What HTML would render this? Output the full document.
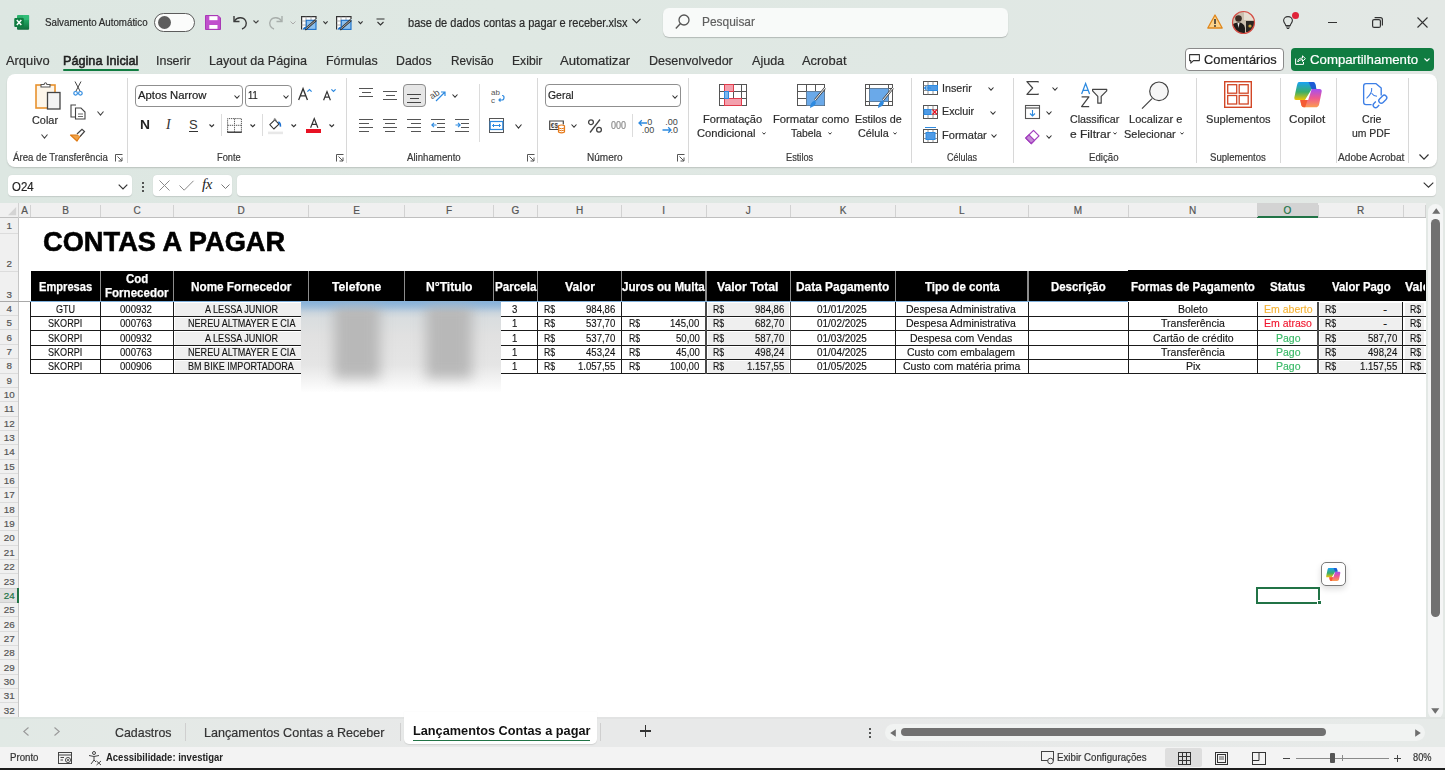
<!DOCTYPE html><html><head><meta charset="utf-8"><style>
*{box-sizing:border-box;margin:0;padding:0}
html,body{width:1445px;height:770px;overflow:hidden;background:linear-gradient(90deg,#dde7e2 0,#dfe8e3 500px,#e0e8e4 950px,#e3e8e5 1445px);font-family:"Liberation Sans",sans-serif;color:#242424}
.a{position:absolute;white-space:nowrap}
svg{position:absolute;overflow:visible}
.tab{position:absolute;top:52px;font-size:14px;color:#2b2b2b;white-space:nowrap}
#ribbon{position:absolute;left:7px;top:74px;width:1430px;height:93px;background:#fff;border-radius:8px;box-shadow:0 1px 1.5px rgba(0,0,0,.16)}
.sep{position:absolute;width:1px;background:#d8d8d8}
.gl{position:absolute;top:151px;font-size:11px;color:#424242;white-space:nowrap}
.rt{position:absolute;font-size:12.5px;color:#333;white-space:nowrap;text-align:center;line-height:15px}
.ch{position:absolute;top:203px;height:15px;font-size:11px;color:#505050;text-align:center;line-height:15px;background:#f0f0f0}
.chs{position:absolute;top:205px;height:12px;width:1px;background:#d4d4d4}
.rh{position:absolute;left:0;width:18px;font-size:11px;color:#505050;text-align:center;background:#f0f0f0}
.rhs{position:absolute;left:0;width:18px;height:1px;background:#dadada}
.cell{position:absolute;font-size:11px;color:#111;white-space:nowrap;overflow:hidden;line-height:14px}
.hd{position:absolute;color:#fff;font-weight:bold;font-size:12.5px;text-align:center;white-space:nowrap;line-height:15px;letter-spacing:-0.1px}
</style></head><body>

<svg style="left:14px;top:15px" width="16" height="16" viewBox="0 0 16 16">
 <defs><linearGradient id="xlg" x1="0" y1="0" x2="0" y2="1"><stop offset="0" stop-color="#2fb872"/><stop offset=".5" stop-color="#1d9a5a"/><stop offset="1" stop-color="#0f6b3a"/></linearGradient></defs>
 <rect x="3" y="0.1" width="12.1" height="14.7" rx="1" fill="url(#xlg)"/>
 <rect x="9" y="0.1" width="6.1" height="5" fill="#35c27e" opacity=".7"/>
 <rect x="0.25" y="2.9" width="9.6" height="9.2" rx="1" fill="#107c41"/>
 <path d="M2.8 5 L7.3 10 M7.3 5 L2.8 10" stroke="#fff" stroke-width="1.5"/>
</svg>
<div class="a" style="left:45.20px;top:16.85px;font-size:11.5px;line-height:11.5px;color:#2a2a2a;transform:scaleX(0.8492);transform-origin:0 0;-webkit-text-stroke:0.2px currentColor;">Salvamento Automático</div>
<div class="a" style="left:154px;top:13px;width:41px;height:19px;border:1px solid #5c5c5c;border-radius:10px;background:#fbfcfb"></div>
<div class="a" style="left:158px;top:16px;width:13px;height:13px;border-radius:50%;background:#5d5d5d"></div>
<svg style="left:205px;top:15px" width="16" height="15" viewBox="0 0 16 15">
 <path d="M0.5 0.5 H13 L15.5 3 V14.5 H0.5 Z" fill="#c04fcd" stroke="#a83ab5" stroke-width="1"/>
 <rect x="4.3" y="1.2" width="8.2" height="4" fill="#fff"/>
 <rect x="4.3" y="10" width="8.2" height="3.8" fill="#fff"/>
</svg>
<svg style="left:232px;top:14px" width="16" height="16" viewBox="0 0 16 16">
 <path d="M2 2 V7.5 H7.5" fill="none" stroke="#3a3a3a" stroke-width="1.4"/>
 <path d="M2.5 7 C5 3 11 2.5 13.5 6.5 C15.5 10 13.5 14 10 15" fill="none" stroke="#3a3a3a" stroke-width="1.4"/>
</svg>
<svg style="left:253px;top:20px" width="6" height="4" viewBox="0 0 6 4"><path d="M0.5 0.5 L3 3 L5.5 0.5" fill="none" stroke="#444" stroke-width="1.1"/></svg>
<svg style="left:268px;top:14px" width="16" height="16" viewBox="0 0 16 16">
 <path d="M14 2 V7.5 H8.5" fill="none" stroke="#a8aeab" stroke-width="1.4"/>
 <path d="M13.5 7 C11 3 5 2.5 2.5 6.5 C0.5 10 2.5 14 6 15" fill="none" stroke="#a8aeab" stroke-width="1.4"/>
</svg>
<svg style="left:290px;top:21px" width="6" height="4" viewBox="0 0 6 4"><path d="M0.5 0.5 L3 3 L5.5 0.5" fill="none" stroke="#aaa" stroke-width="1"/></svg>

<svg style="left:301px;top:15.8px" width="16" height="14" viewBox="0 0 16 14">
 <rect x="0.6" y="0.6" width="14.4" height="12.8" fill="#fff"/>
 <path d="M0.6 13.4 V0.6 H15 V3" fill="none" stroke="#333" stroke-width="1.2"/>
 <path d="M0.6 5 H5 M0.6 9 H5 M5 0.6 V13 M10 0.6 V4" stroke="#999" stroke-width=".8"/>
 <rect x="5.3" y="4.3" width="9.7" height="9.1" fill="#8cc0ee" stroke="#1b6fc8" stroke-width="1.1"/>
 <path d="M4 13.6 L15 4" stroke="#333" stroke-width="2.4"/>
 <path d="M5 12.6 L14.4 4.6" stroke="#ddd" stroke-width=".7"/>
 <path d="M1.5 13.8 Q2.5 10.5 5.5 10.8 Q6.2 13.5 1.5 13.8 Z" fill="#1b6fc8"/>
</svg>
<svg style="left:323px;top:20.7px" width="5" height="3" viewBox="0 0 5 3"><path d="M0.4 0.4 L2.5 2.6 L4.6 0.4" fill="none" stroke="#333" stroke-width="1.1"/></svg>
<svg style="left:336px;top:15.8px" width="16" height="14" viewBox="0 0 16 14">
 <rect x="0.6" y="0.6" width="14.4" height="12.8" fill="#fff"/>
 <path d="M0.6 13.4 V0.6 H15 V3" fill="none" stroke="#333" stroke-width="1.2"/>
 <path d="M0.6 5 H5 M0.6 9 H5 M5 0.6 V13 M10 0.6 V4" stroke="#999" stroke-width=".8"/>
 <rect x="5.3" y="4.3" width="9.7" height="9.1" fill="#8cc0ee" stroke="#1b6fc8" stroke-width="1.1"/>
 <path d="M4 13.6 L15 4" stroke="#333" stroke-width="2.4"/>
 <path d="M5 12.6 L14.4 4.6" stroke="#ddd" stroke-width=".7"/>
 <path d="M1.5 13.8 Q2.5 10.5 5.5 10.8 Q6.2 13.5 1.5 13.8 Z" fill="#1b6fc8"/>
</svg>
<svg style="left:358px;top:20.7px" width="5" height="3" viewBox="0 0 5 3"><path d="M0.4 0.4 L2.5 2.6 L4.6 0.4" fill="none" stroke="#333" stroke-width="1.1"/></svg>

<svg style="left:376px;top:18px" width="9" height="9" viewBox="0 0 9 9"><path d="M0.5 1 H8.5 M1.5 4 L4.5 7 L7.5 4" fill="none" stroke="#333" stroke-width="1.1"/></svg>
<div class="a" style="left:407.60px;top:17.05px;font-size:12.3px;line-height:12.3px;color:#2a2a2a;transform:scaleX(0.8967);transform-origin:0 0;-webkit-text-stroke:0.2px currentColor;">base de dados contas a pagar e receber.xlsx</div>
<svg style="left:632px;top:18px" width="9" height="6" viewBox="0 0 9 6"><path d="M0.5 0.8 L4.5 4.8 L8.5 0.8" fill="none" stroke="#333" stroke-width="1.2"/></svg>
<div class="a" style="left:663px;top:8px;width:345px;height:29px;background:#f8faf9;border-radius:6px;box-shadow:0 1px 1px rgba(0,0,0,.2)"></div>
<svg style="left:675px;top:14px" width="15" height="16" viewBox="0 0 15 16"><circle cx="9" cy="6" r="5" fill="none" stroke="#555" stroke-width="1.3"/><path d="M5.5 9.5 L0.8 14.5" stroke="#555" stroke-width="1.4"/></svg>
<div class="a" style="left:701.70px;top:15.00px;font-size:13.4px;line-height:13.4px;color:#5f5f5f;transform:scaleX(0.8895);transform-origin:0 0;-webkit-text-stroke:0.2px currentColor;">Pesquisar</div>
<svg style="left:1207px;top:14px" width="16" height="15" viewBox="0 0 16 15"><path d="M8 1 L15.2 14 H0.8 Z" fill="#fbd28a" stroke="#e0871b" stroke-width="1.3" stroke-linejoin="round"/><path d="M8 5 V10" stroke="#2a2a2a" stroke-width="1.5"/><circle cx="8" cy="12" r="0.9" fill="#2a2a2a"/></svg>
<svg style="left:1232px;top:11px" width="23" height="23" viewBox="0 0 23 23">
<defs><clipPath id="avc"><circle cx="11.5" cy="11.5" r="11"/></clipPath></defs>
<g clip-path="url(#avc)">
<rect x="0" y="0" width="23" height="23" fill="#cbbfae"/>
<rect x="12" y="0" width="11" height="9" fill="#e6dfd2"/>
<rect x="14" y="10" width="8" height="11" fill="#2a2622"/>
<circle cx="18" cy="15" r="1.6" fill="#c9a23c"/>
<circle cx="6.5" cy="7.5" r="3.3" fill="#3a2c24"/>
<path d="M-1 23 V16 Q1 11.5 6.5 11.5 Q12 11.5 13 17 V23 Z" fill="#1f1c1a"/>
<path d="M5.5 12 L6.5 17 L7.5 12 Z" fill="#eee"/>
</g>
<circle cx="11.5" cy="11.5" r="11" fill="none" stroke="#d44d45" stroke-width="1.2"/>
</svg>
<svg style="left:1282.8px;top:16px" width="10" height="13" viewBox="0 0 10 13"><path d="M5 0.6 C2.2 0.6 0.6 2.6 0.6 4.6 C0.6 6.8 2.6 7.6 2.8 9.6 H7.2 C7.4 7.6 9.4 6.8 9.4 4.6 C9.4 2.6 7.8 0.6 5 0.6 Z" fill="none" stroke="#333" stroke-width="1.1"/><path d="M3 11 H7 M3.8 12.5 H6.2" stroke="#333" stroke-width="1"/></svg>
<div class="a" style="left:1291.7px;top:11.5px;width:7px;height:7px;border-radius:50%;background:#e0243a"></div>
<div class="a" style="left:1327.7px;top:21.5px;width:9.5px;height:1.5px;background:#333"></div>
<svg style="left:1372px;top:17px" width="11" height="11" viewBox="0 0 11 11"><rect x="0.6" y="2.6" width="7.8" height="7.8" rx="1.5" fill="none" stroke="#333" stroke-width="1.2"/><path d="M2.6 0.6 H8.4 Q10.4 0.6 10.4 2.6 V8.4" fill="none" stroke="#333" stroke-width="1.2"/></svg>
<svg style="left:1417px;top:17px" width="11" height="11" viewBox="0 0 11 11"><path d="M0.5 0.5 L10.5 10.5 M10.5 0.5 L0.5 10.5" stroke="#333" stroke-width="1.1"/></svg>

<div class="a" style="left:6.20px;top:53.80px;font-size:13px;line-height:13px;color:#2e2e2e;transform:scaleX(0.9891);transform-origin:0 0;-webkit-text-stroke:0.2px currentColor;">Arquivo</div>
<div class="a" style="left:63.00px;top:53.80px;font-size:13px;line-height:13px;color:#1f1f1f;transform:scaleX(0.9751);transform-origin:0 0;-webkit-text-stroke:0.55px #1f1f1f;">Página Inicial</div>
<div class="a" style="left:156.40px;top:53.80px;font-size:13px;line-height:13px;color:#2e2e2e;transform:scaleX(0.9580);transform-origin:0 0;-webkit-text-stroke:0.2px currentColor;">Inserir</div>
<div class="a" style="left:209.30px;top:53.80px;font-size:13px;line-height:13px;color:#2e2e2e;transform:scaleX(0.9684);transform-origin:0 0;-webkit-text-stroke:0.2px currentColor;">Layout da Página</div>
<div class="a" style="left:326.00px;top:53.80px;font-size:13px;line-height:13px;color:#2e2e2e;transform:scaleX(0.9543);transform-origin:0 0;-webkit-text-stroke:0.2px currentColor;">Fórmulas</div>
<div class="a" style="left:396.30px;top:53.80px;font-size:13px;line-height:13px;color:#2e2e2e;transform:scaleX(0.9474);transform-origin:0 0;-webkit-text-stroke:0.2px currentColor;">Dados</div>
<div class="a" style="left:450.80px;top:53.80px;font-size:13px;line-height:13px;color:#2e2e2e;transform:scaleX(0.9049);transform-origin:0 0;-webkit-text-stroke:0.2px currentColor;">Revisão</div>
<div class="a" style="left:511.60px;top:53.80px;font-size:13px;line-height:13px;color:#2e2e2e;transform:scaleX(0.9352);transform-origin:0 0;-webkit-text-stroke:0.2px currentColor;">Exibir</div>
<div class="a" style="left:560.40px;top:53.80px;font-size:13px;line-height:13px;color:#2e2e2e;transform:scaleX(1.0107);transform-origin:0 0;-webkit-text-stroke:0.2px currentColor;">Automatizar</div>
<div class="a" style="left:649.40px;top:53.80px;font-size:13px;line-height:13px;color:#2e2e2e;transform:scaleX(0.9664);transform-origin:0 0;-webkit-text-stroke:0.2px currentColor;">Desenvolvedor</div>
<div class="a" style="left:751.80px;top:53.80px;font-size:13px;line-height:13px;color:#2e2e2e;transform:scaleX(0.9684);transform-origin:0 0;-webkit-text-stroke:0.2px currentColor;">Ajuda</div>
<div class="a" style="left:802.30px;top:53.80px;font-size:13px;line-height:13px;color:#2e2e2e;transform:scaleX(0.9933);transform-origin:0 0;-webkit-text-stroke:0.2px currentColor;">Acrobat</div>
<div class="a" style="left:62.6px;top:69px;width:76.5px;height:2px;background:#107c41;border-radius:1px"></div>

<div class="a" style="left:1185px;top:48px;width:99px;height:23px;background:#fff;border:1px solid #8a8a8a;border-radius:4px"></div>
<svg style="left:1189.3px;top:54.4px" width="11" height="10" viewBox="0 0 11 10"><path d="M0.6 0.6 H10.4 V6.6 H4.4 L1.8 9.2 V6.6 H0.6 Z" fill="none" stroke="#333" stroke-width="1.05" stroke-linejoin="round"/></svg>
<div class="a" style="left:1204.30px;top:52.80px;font-size:13px;line-height:13px;color:#222;transform:scaleX(0.9865);transform-origin:0 0;-webkit-text-stroke:0.2px currentColor;">Comentários</div>
<div class="a" style="left:1291px;top:48px;width:143px;height:23px;background:#107c41;border-radius:4px"></div>
<svg style="left:1294.7px;top:53.9px" width="11" height="11" viewBox="0 0 11 11"><path d="M0.6 4.5 V10.4 H8.5 V8" fill="none" stroke="#fff" stroke-width="1"/><path d="M2.8 8 C2.8 5 5 4 7.5 4 V1.8 L10.4 4.6 L7.5 7.4 V5.6 C5.5 5.6 4 6.4 2.8 8 Z" fill="none" stroke="#fff" stroke-width="1" stroke-linejoin="round"/></svg>
<div class="a" style="left:1310.00px;top:52.80px;font-size:13px;line-height:13px;color:#fff;transform:scaleX(1.0168);transform-origin:0 0;-webkit-text-stroke:0.2px currentColor;">Compartilhamento</div>
<svg style="left:1424px;top:58px" width="6" height="4" viewBox="0 0 6 4"><path d="M0.5 0.5 L3 3 L5.5 0.5" fill="none" stroke="#fff" stroke-width="1.1"/></svg>

<div id="ribbon"></div>
<div class="sep" style="left:127px;top:78px;height:85px"></div>
<div class="sep" style="left:346px;top:78px;height:85px"></div>
<div class="sep" style="left:537px;top:78px;height:85px"></div>
<div class="sep" style="left:688px;top:78px;height:85px"></div>
<div class="sep" style="left:911px;top:78px;height:85px"></div>
<div class="sep" style="left:1013px;top:78px;height:85px"></div>
<div class="sep" style="left:1196px;top:78px;height:85px"></div>
<div class="sep" style="left:1280px;top:78px;height:85px"></div>
<div class="sep" style="left:1336px;top:78px;height:85px"></div>
<div class="sep" style="left:1408px;top:78px;height:85px"></div>
<div class="sep" style="left:221px;top:114px;height:22px;background:#dcdcdc"></div>
<div class="sep" style="left:262px;top:114px;height:22px;background:#dcdcdc"></div>
<div class="sep" style="left:479px;top:84px;height:58px;background:#dcdcdc"></div>
<div class="sep" style="left:632px;top:114px;height:23px;background:#dcdcdc"></div>
<div class="a" style="left:13.10px;top:153.00px;font-size:10px;line-height:10px;color:#3a3a3a;transform:scaleX(0.9635);transform-origin:0 0;-webkit-text-stroke:0.2px currentColor;">Área de Transferência</div>
<div class="a" style="left:216.90px;top:153.00px;font-size:10px;line-height:10px;color:#3a3a3a;transform:scaleX(0.9268);transform-origin:0 0;-webkit-text-stroke:0.2px currentColor;">Fonte</div>
<div class="a" style="left:407.30px;top:153.00px;font-size:10px;line-height:10px;color:#3a3a3a;transform:scaleX(0.9660);transform-origin:0 0;-webkit-text-stroke:0.2px currentColor;">Alinhamento</div>
<div class="a" style="left:586.70px;top:153.00px;font-size:10px;line-height:10px;color:#3a3a3a;transform:scaleX(1.0009);transform-origin:0 0;-webkit-text-stroke:0.2px currentColor;">Número</div>
<div class="a" style="left:785.70px;top:153.00px;font-size:10px;line-height:10px;color:#3a3a3a;transform:scaleX(0.9235);transform-origin:0 0;-webkit-text-stroke:0.2px currentColor;">Estilos</div>
<div class="a" style="left:946.70px;top:153.00px;font-size:10px;line-height:10px;color:#3a3a3a;transform:scaleX(0.9026);transform-origin:0 0;-webkit-text-stroke:0.2px currentColor;">Células</div>
<div class="a" style="left:1089.20px;top:153.00px;font-size:10px;line-height:10px;color:#3a3a3a;transform:scaleX(0.9648);transform-origin:0 0;-webkit-text-stroke:0.2px currentColor;">Edição</div>
<div class="a" style="left:1209.70px;top:153.00px;font-size:10px;line-height:10px;color:#3a3a3a;transform:scaleX(0.9577);transform-origin:0 0;-webkit-text-stroke:0.2px currentColor;">Suplementos</div>
<div class="a" style="left:1338.30px;top:153.00px;font-size:10px;line-height:10px;color:#3a3a3a;transform:scaleX(1.0121);transform-origin:0 0;-webkit-text-stroke:0.2px currentColor;">Adobe Acrobat</div>
<svg style="left:115px;top:154px" width="8" height="8" viewBox="0 0 8 8"><path d="M0.5 7.5 V0.5 H7.5" fill="none" stroke="#555" stroke-width="1"/><path d="M2.5 2.5 L7 7 M3.5 7 H7 V3.5" fill="none" stroke="#555" stroke-width="1"/></svg>
<svg style="left:336px;top:154px" width="8" height="8" viewBox="0 0 8 8"><path d="M0.5 7.5 V0.5 H7.5" fill="none" stroke="#555" stroke-width="1"/><path d="M2.5 2.5 L7 7 M3.5 7 H7 V3.5" fill="none" stroke="#555" stroke-width="1"/></svg>
<svg style="left:527px;top:154px" width="8" height="8" viewBox="0 0 8 8"><path d="M0.5 7.5 V0.5 H7.5" fill="none" stroke="#555" stroke-width="1"/><path d="M2.5 2.5 L7 7 M3.5 7 H7 V3.5" fill="none" stroke="#555" stroke-width="1"/></svg>
<svg style="left:677px;top:154px" width="8" height="8" viewBox="0 0 8 8"><path d="M0.5 7.5 V0.5 H7.5" fill="none" stroke="#555" stroke-width="1"/><path d="M2.5 2.5 L7 7 M3.5 7 H7 V3.5" fill="none" stroke="#555" stroke-width="1"/></svg>
<svg style="left:1419px;top:154px" width="10" height="6" viewBox="0 0 10 6"><path d="M0.5 0.5 L5.0 5.2 L9.5 0.5" fill="none" stroke="#333" stroke-width="1.2"/></svg>
<svg style="left:35px;top:81px" width="26" height="29" viewBox="0 0 26 29">
<rect x="1" y="4" width="19" height="23" fill="#fdf6ea" stroke="#e8922d" stroke-width="1.6"/>
<path d="M6 6 V3.5 H9 Q10.5 0 12 3.5 H15 V6 Z" fill="#fff" stroke="#555" stroke-width="1.1"/>
<rect x="12.5" y="11.5" width="12.5" height="16.5" fill="#f4f4f4" stroke="#444" stroke-width="1.3"/>
</svg>
<div class="a" style="left:32.00px;top:115.05px;font-size:11.5px;line-height:11.5px;color:#2e2e2e;transform:scaleX(0.9461);transform-origin:0 0;-webkit-text-stroke:0.2px currentColor;">Colar</div>
<svg style="left:41px;top:134px" width="7" height="5" viewBox="0 0 7 5"><path d="M0.5 0.5 L3.5 4.2 L6.5 0.5" fill="none" stroke="#444" stroke-width="1.1"/></svg>
<svg style="left:73px;top:81px" width="10" height="15" viewBox="0 0 10 15"><path d="M2 0.5 L7 10 M8 0.5 L3 10" stroke="#444" stroke-width="1"/><circle cx="2.6" cy="12.3" r="1.8" fill="none" stroke="#2d8ae0" stroke-width="1.2"/><circle cx="7.4" cy="12.3" r="1.8" fill="none" stroke="#2d8ae0" stroke-width="1.2"/></svg>
<svg style="left:70px;top:104px" width="16" height="16" viewBox="0 0 16 16"><path d="M6 1 H1 V13 H6" fill="none" stroke="#444" stroke-width="1.1"/><path d="M5.5 4 H11 L15 8 V15 H5.5 Z" fill="#fff" stroke="#444" stroke-width="1.1"/><path d="M8 10 H13 M8 12.5 H13" stroke="#444" stroke-width=".8"/></svg>
<svg style="left:97px;top:111px" width="7" height="5" viewBox="0 0 7 5"><path d="M0.5 0.5 L3.5 4.2 L6.5 0.5" fill="none" stroke="#444" stroke-width="1.1"/></svg>
<svg style="left:70px;top:128px" width="16" height="15" viewBox="0 0 16 15"><path d="M0.5 7 L7 13 L11 7 Z" fill="#f0a34a" stroke="#e07a12" stroke-width="1.2" stroke-linejoin="round"/><path d="M7 6 L12 1.2 L14.5 3.5 L10 8.5" fill="#fff" stroke="#444" stroke-width="1.2"/></svg>
<div class="a" style="left:135px;top:85px;width:108px;height:22px;border:1px solid #8f8f8f;border-radius:4px;background:#fff"></div>
<div class="a" style="left:137.50px;top:90.15px;font-size:11.3px;line-height:11.3px;color:#222;transform:scaleX(1.0007);transform-origin:0 0;-webkit-text-stroke:0.2px currentColor;">Aptos Narrow</div>
<svg style="left:234px;top:95px" width="6" height="4" viewBox="0 0 6 4"><path d="M0.5 0.5 L3.0 3.2 L5.5 0.5" fill="none" stroke="#333" stroke-width="1.1"/></svg>
<div class="a" style="left:245px;top:85px;width:47px;height:22px;border:1px solid #8f8f8f;border-radius:4px;background:#fff"></div>
<div class="a" style="left:248.00px;top:90.15px;font-size:11.3px;line-height:11.3px;color:#222;transform:scaleX(0.8269);transform-origin:0 0;-webkit-text-stroke:0.2px currentColor;">11</div>
<svg style="left:283px;top:95px" width="6" height="4" viewBox="0 0 6 4"><path d="M0.5 0.5 L3.0 3.2 L5.5 0.5" fill="none" stroke="#333" stroke-width="1.1"/></svg>
<svg style="left:297.8px;top:88.2px" width="10.1" height="12" viewBox="0 0 10.1 12"><path d="M0.65 12 L5.05 0.65 L9.45 12 M2.222 7.92 H7.878" fill="none" stroke="#333" stroke-width="1.3"/></svg>
<svg style="left:307px;top:89px" width="5" height="3" viewBox="0 0 5 3"><path d="M0.4 2.7 L2.5 0.5 L4.6 2.7" fill="none" stroke="#2d8ae0" stroke-width="1.2"/></svg>
<svg style="left:323.3px;top:90.9px" width="8" height="9.3" viewBox="0 0 8 9.3"><path d="M0.6 9.3 L4.0 0.6 L7.4 9.3 M1.76 6.138000000000001 H6.24" fill="none" stroke="#333" stroke-width="1.2"/></svg>
<svg style="left:331.1px;top:89.3px" width="5" height="3" viewBox="0 0 5 3"><path d="M0.4 0.3 L2.5 2.5 L4.6 0.3" fill="none" stroke="#2d8ae0" stroke-width="1.2"/></svg>
<div class="a" style="left:140.40px;top:118.75px;font-size:12.5px;line-height:12.5px;color:#222;font-weight:bold;transform:scaleX(1.1078);transform-origin:0 0;">N</div>
<div class="a" style="left:166px;top:117px;font-size:14px;color:#333;font-style:italic;font-family:&quot;Liberation Serif&quot;,serif">I</div>
<div class="a" style="left:189px;top:117px;font-size:13px;color:#333;">S</div>
<div class="a" style="left:189px;top:131px;width:9px;height:1px;background:#333"></div>
<svg style="left:209px;top:124.2px" width="5.5" height="3.5" viewBox="0 0 5.5 3.5"><path d="M0.5 0.5 L2.75 2.7 L5.0 0.5" fill="none" stroke="#333" stroke-width="1.1"/></svg>
<svg style="left:227px;top:117.8px" width="15" height="15" viewBox="0 0 15 15"><path d="M0.6 14 V0.6 H14.4 V14 M0.6 7.3 H14.4" fill="none" stroke="#555" stroke-width="1" stroke-dasharray="1.3 0.8"/><path d="M7.5 0.6 V14" stroke="#666" stroke-width="1" stroke-dasharray="1.3 0.8"/><path d="M0.2 14.2 H14.8" stroke="#333" stroke-width="1.4"/></svg>
<svg style="left:250px;top:124.2px" width="5.5" height="3.5" viewBox="0 0 5.5 3.5"><path d="M0.5 0.5 L2.75 2.7 L5.0 0.5" fill="none" stroke="#333" stroke-width="1.1"/></svg>
<svg style="left:268px;top:117.5px" width="16" height="17" viewBox="0 0 16 17"><path d="M1.8 6.6 L6.8 1.8 L11 6.2 L5.8 11 Z" fill="#fff" stroke="#333" stroke-width="1.1" stroke-linejoin="round"/><path d="M6.2 3 V0.8 Q6.8 0.2 7.4 0.8 L8.4 3.5" fill="none" stroke="#777" stroke-width="1"/><path d="M10.2 4.4 Q12.6 4.2 12.4 8.6" fill="none" stroke="#1b6fd0" stroke-width="1.6"/><rect x="0" y="13.6" width="15" height="2.6" fill="#e8e8e8"/></svg>
<svg style="left:291px;top:124.2px" width="5.5" height="3.5" viewBox="0 0 5.5 3.5"><path d="M0.5 0.5 L2.75 2.7 L5.0 0.5" fill="none" stroke="#333" stroke-width="1.1"/></svg>
<svg style="left:309.9px;top:118.2px" width="8.5" height="9.7" viewBox="0 0 8.5 9.7"><path d="M0.6 9.7 L4.25 0.6 L7.9 9.7 M1.87 6.402 H6.63" fill="none" stroke="#333" stroke-width="1.2"/></svg>
<div class="a" style="left:306.4px;top:129px;width:15.1px;height:3.8px;background:#e81123"></div>
<svg style="left:329px;top:124.2px" width="5.5" height="3.5" viewBox="0 0 5.5 3.5"><path d="M0.5 0.5 L2.75 2.7 L5.0 0.5" fill="none" stroke="#333" stroke-width="1.1"/></svg>
<div class="a" style="left:359px;top:88px;width:14px;height:1.3px;background:#555"></div><div class="a" style="left:362px;top:92px;width:9px;height:1.3px;background:#555"></div><div class="a" style="left:359px;top:96px;width:14px;height:1.3px;background:#555"></div>
<div class="a" style="left:383px;top:91px;width:14px;height:1.3px;background:#555"></div><div class="a" style="left:386px;top:95px;width:9px;height:1.3px;background:#555"></div><div class="a" style="left:383px;top:99px;width:14px;height:1.3px;background:#555"></div>
<div class="a" style="left:403px;top:84px;width:23px;height:23px;border:1px solid #8c8c8c;border-radius:4px;background:#e6e6e6"></div>
<div class="a" style="left:407px;top:94px;width:14px;height:1.3px;background:#444"></div><div class="a" style="left:410px;top:98px;width:9px;height:1.3px;background:#444"></div><div class="a" style="left:407px;top:102px;width:14px;height:1.3px;background:#444"></div>
<svg style="left:430px;top:87px" width="17" height="15" viewBox="0 0 17 15"><text x="0" y="10" font-size="9" fill="#444" transform="rotate(-35 5 8)" font-family="Liberation Sans">ab</text><path d="M6 14 L15 5 M11 5 H15 V9" fill="none" stroke="#2d8ae0" stroke-width="1.2"/></svg>
<svg style="left:452px;top:94px" width="6" height="4" viewBox="0 0 6 4"><path d="M0.5 0.5 L3.0 3.2 L5.5 0.5" fill="none" stroke="#333" stroke-width="1.1"/></svg>
<div class="a" style="left:359px;top:119px;width:14px;height:1.3px;background:#555"></div><div class="a" style="left:359px;top:123px;width:10px;height:1.3px;background:#555"></div><div class="a" style="left:359px;top:127px;width:14px;height:1.3px;background:#555"></div><div class="a" style="left:359px;top:131px;width:10px;height:1.3px;background:#555"></div>
<div class="a" style="left:383px;top:119px;width:14px;height:1.3px;background:#555"></div><div class="a" style="left:385px;top:123px;width:10px;height:1.3px;background:#555"></div><div class="a" style="left:383px;top:127px;width:14px;height:1.3px;background:#555"></div><div class="a" style="left:385px;top:131px;width:10px;height:1.3px;background:#555"></div>
<div class="a" style="left:407px;top:119px;width:14px;height:1.3px;background:#555"></div><div class="a" style="left:411px;top:123px;width:10px;height:1.3px;background:#555"></div><div class="a" style="left:407px;top:127px;width:14px;height:1.3px;background:#555"></div><div class="a" style="left:411px;top:131px;width:10px;height:1.3px;background:#555"></div>
<div class="a" style="left:431px;top:119px;width:14px;height:1.3px;background:#555"></div><div class="a" style="left:437px;top:123px;width:8px;height:1.3px;background:#555"></div><div class="a" style="left:437px;top:127px;width:8px;height:1.3px;background:#555"></div><div class="a" style="left:431px;top:131px;width:14px;height:1.3px;background:#555"></div>
<svg style="left:431px;top:122px" width="6" height="6" viewBox="0 0 6 6"><path d="M5.5 3 H0.8 M3 0.8 L0.8 3 L3 5.2" fill="none" stroke="#2d8ae0" stroke-width="1.1"/></svg>
<div class="a" style="left:455px;top:119px;width:14px;height:1.3px;background:#555"></div><div class="a" style="left:461px;top:123px;width:8px;height:1.3px;background:#555"></div><div class="a" style="left:461px;top:127px;width:8px;height:1.3px;background:#555"></div><div class="a" style="left:455px;top:131px;width:14px;height:1.3px;background:#555"></div>
<svg style="left:455px;top:122px" width="6" height="6" viewBox="0 0 6 6"><path d="M0.5 3 H5.2 M3 0.8 L5.2 3 L3 5.2" fill="none" stroke="#2d8ae0" stroke-width="1.1"/></svg>
<svg style="left:491px;top:88px" width="14" height="16" viewBox="0 0 14 16"><text x="0" y="7" font-size="8" fill="#555" font-family="Liberation Sans">ab</text><text x="0" y="14.5" font-size="8" fill="#555" font-family="Liberation Sans">c</text><path d="M8 12 H11 Q13 12 13 9.5 Q13 7.5 11 7.5 M9.5 10.5 L8 12 L9.5 13.5" fill="none" stroke="#2d8ae0" stroke-width="1.2"/></svg>
<svg style="left:489px;top:118px" width="15" height="15" viewBox="0 0 15 15"><rect x="0.5" y="0.5" width="14" height="14" fill="none" stroke="#555" stroke-width="1"/><rect x="1.2" y="3.5" width="12.6" height="8" fill="#fff" stroke="#2d8ae0" stroke-width="1.2"/><path d="M3.5 7.5 H11.5 M5 6 L3.5 7.5 L5 9 M10 6 L11.5 7.5 L10 9" fill="none" stroke="#2d8ae0" stroke-width="1"/></svg>
<svg style="left:515px;top:124px" width="7" height="5" viewBox="0 0 7 5"><path d="M0.5 0.5 L3.5 4.2 L6.5 0.5" fill="none" stroke="#333" stroke-width="1.1"/></svg>
<div class="a" style="left:545px;top:84px;width:136px;height:23px;border:1px solid #8f8f8f;border-radius:4px;background:#fff"></div>
<div class="a" style="left:547.50px;top:90.35px;font-size:11.3px;line-height:11.3px;color:#222;transform:scaleX(0.9228);transform-origin:0 0;-webkit-text-stroke:0.2px currentColor;">Geral</div>
<svg style="left:672px;top:95px" width="6" height="4" viewBox="0 0 6 4"><path d="M0.5 0.5 L3.0 3.2 L5.5 0.5" fill="none" stroke="#333" stroke-width="1.1"/></svg>
<svg style="left:549px;top:120px" width="16" height="14" viewBox="0 0 16 14"><path d="M9 9.5 H0.7 V1 H14.3 V4.5" fill="none" stroke="#444" stroke-width="1.2"/><text x="1.8" y="8" font-size="6.5" fill="#444" font-family="Liberation Sans" font-weight="bold">€$</text><path d="M9.5 5.8 Q12.5 4.2 15.5 5.8 V12 Q12.5 13.8 9.5 12 Z" fill="#fff" stroke="#e67a1a" stroke-width="1.2"/><path d="M9.5 8 Q12.5 9.5 15.5 8 M9.5 10 Q12.5 11.5 15.5 10" fill="none" stroke="#e67a1a" stroke-width="1"/></svg>
<svg style="left:571px;top:124px" width="6" height="4" viewBox="0 0 6 4"><path d="M0.5 0.5 L3.0 3.2 L5.5 0.5" fill="none" stroke="#333" stroke-width="1.1"/></svg>
<svg style="left:588px;top:119px" width="14" height="14" viewBox="0 0 14 14"><circle cx="3" cy="3.2" r="2.4" fill="none" stroke="#444" stroke-width="1.3"/><circle cx="11" cy="10.8" r="2.4" fill="none" stroke="#444" stroke-width="1.3"/><path d="M12 0.5 L2 13.5" stroke="#444" stroke-width="1.3"/></svg>
<div class="a" style="left:611.00px;top:119.75px;font-size:10.5px;line-height:10.5px;color:#8a8a8a;transform:scaleX(0.8562);transform-origin:0 0;-webkit-text-stroke:0.2px currentColor;">000</div>
<svg style="left:638px;top:117px" width="16" height="17" viewBox="0 0 16 17"><path d="M1 6 H9 M3.8 3.2 L1 6 L3.8 8.8" fill="none" stroke="#2d8ae0" stroke-width="1.3"/><text x="9.3" y="8" font-size="9" fill="#444" font-family="Liberation Sans">0</text><text x="3.8" y="16" font-size="9" fill="#444" font-family="Liberation Sans">.00</text></svg>
<svg style="left:662px;top:117px" width="16" height="17" viewBox="0 0 16 17"><text x="3.3" y="8" font-size="9" fill="#444" font-family="Liberation Sans">.00</text><path d="M0.5 13 H9 M6.2 10.2 L9 13 L6.2 15.8" fill="none" stroke="#2d8ae0" stroke-width="1.3"/><text x="8.5" y="16" font-size="9" fill="#444" font-family="Liberation Sans">.0</text></svg>
<svg style="left:719px;top:84px" width="28" height="22" viewBox="0 0 28 22"><rect x="0.5" y="0.5" width="27" height="21" fill="#fff" stroke="#555" stroke-width="1"/><path d="M0.5 7.5 H27.5 M0.5 14.5 H27.5 M5.5 0.5 V21.5 M14.5 0.5 V21.5 M22.5 0.5 V21.5" stroke="#555" stroke-width="1"/><rect x="5.5" y="0.5" width="9" height="7" fill="#f3a0ad" stroke="#e03c4c" stroke-width="1"/><rect x="5.5" y="14.5" width="17" height="7" fill="#f3a0ad" stroke="#e03c4c" stroke-width="1"/><rect x="5.5" y="7.5" width="4" height="7" fill="#7fb6ec" stroke="#2d8ae0" stroke-width="1"/></svg>
<div class="a" style="left:702.60px;top:113.75px;font-size:11.5px;line-height:11.5px;color:#2e2e2e;transform:scaleX(0.9648);transform-origin:0 0;-webkit-text-stroke:0.2px currentColor;">Formatação</div>
<div class="a" style="left:697.40px;top:128.35px;font-size:11.5px;line-height:11.5px;color:#2e2e2e;transform:scaleX(0.9735);transform-origin:0 0;-webkit-text-stroke:0.2px currentColor;">Condicional</div>
<svg style="left:761.5px;top:132.4px" width="4" height="3" viewBox="0 0 4 3"><path d="M0.5 0.5 L2.0 2.2 L3.5 0.5" fill="none" stroke="#333" stroke-width="1"/></svg>
<svg style="left:797px;top:84px" width="30" height="25" viewBox="0 0 30 25"><rect x="0.5" y="0.5" width="27" height="21" fill="#fff" stroke="#555" stroke-width="1"/><path d="M0.5 7.5 H27.5 M0.5 14.5 H27.5 M9.5 0.5 V21.5 M18.5 0.5 V21.5" stroke="#555" stroke-width="1"/><rect x="9.5" y="7.5" width="18" height="14" fill="#6aa9e9"/><path d="M18 16 L28 4" stroke="#444" stroke-width="2.2"/><path d="M18 16 L28 4" stroke="#fff" stroke-width="1"/><path d="M13 24 Q13 18 18 16.5 Q20 19 17 22 Z" fill="#2d8ae0"/></svg>
<div class="a" style="left:772.80px;top:113.75px;font-size:11.5px;line-height:11.5px;color:#2e2e2e;transform:scaleX(0.9774);transform-origin:0 0;-webkit-text-stroke:0.2px currentColor;">Formatar como</div>
<div class="a" style="left:790.90px;top:128.35px;font-size:11.5px;line-height:11.5px;color:#2e2e2e;transform:scaleX(0.9030);transform-origin:0 0;-webkit-text-stroke:0.2px currentColor;">Tabela</div>
<svg style="left:827.8px;top:132.4px" width="4" height="3" viewBox="0 0 4 3"><path d="M0.5 0.5 L2.0 2.2 L3.5 0.5" fill="none" stroke="#333" stroke-width="1"/></svg>
<svg style="left:865px;top:84px" width="30" height="25" viewBox="0 0 30 25"><rect x="0.5" y="0.5" width="27" height="21" fill="#fff" stroke="#555" stroke-width="1"/><path d="M0.5 4.5 H27.5 M0.5 17.5 H27.5 M4.5 0.5 V21.5 M23.5 0.5 V21.5" stroke="#555" stroke-width="1"/><rect x="4.5" y="4.5" width="19" height="13" fill="#6aa9e9"/><path d="M18 16 L28 4" stroke="#444" stroke-width="2.2"/><path d="M18 16 L28 4" stroke="#fff" stroke-width="1"/><path d="M13 24 Q13 18 18 16.5 Q20 19 17 22 Z" fill="#2d8ae0"/></svg>
<div class="a" style="left:855.30px;top:113.75px;font-size:11.5px;line-height:11.5px;color:#2e2e2e;transform:scaleX(0.9367);transform-origin:0 0;-webkit-text-stroke:0.2px currentColor;">Estilos de</div>
<div class="a" style="left:857.60px;top:128.35px;font-size:11.5px;line-height:11.5px;color:#2e2e2e;transform:scaleX(0.9417);transform-origin:0 0;-webkit-text-stroke:0.2px currentColor;">Célula</div>
<svg style="left:893px;top:132.4px" width="4" height="3" viewBox="0 0 4 3"><path d="M0.5 0.5 L2.0 2.2 L3.5 0.5" fill="none" stroke="#333" stroke-width="1"/></svg>
<svg style="left:923px;top:81px" width="15" height="14" viewBox="0 0 15 14"><rect x="0.5" y="0.5" width="14" height="13" fill="#fff" stroke="#555" stroke-width="1"/><path d="M0.5 4.5 H14.5 M0.5 9.5 H14.5 M5 0.5 V13.5 M10 0.5 V13.5" stroke="#777" stroke-width=".8"/><rect x="5" y="4.5" width="9.5" height="5" fill="#4f9be6" stroke="#2d8ae0" stroke-width="1"/><path d="M8 7 H1.5 M3.5 5 L1.5 7 L3.5 9" fill="none" stroke="#2d8ae0" stroke-width="1.1"/></svg>
<div class="a" style="left:942.10px;top:82.75px;font-size:11.5px;line-height:11.5px;color:#2e2e2e;transform:scaleX(0.9295);transform-origin:0 0;-webkit-text-stroke:0.2px currentColor;">Inserir</div>
<svg style="left:988px;top:87px" width="6" height="4" viewBox="0 0 6 4"><path d="M0.5 0.5 L3.0 3.2 L5.5 0.5" fill="none" stroke="#333" stroke-width="1.1"/></svg>
<svg style="left:923px;top:105px" width="15" height="14" viewBox="0 0 15 14"><rect x="0.5" y="0.5" width="14" height="13" fill="#fff" stroke="#555" stroke-width="1"/><path d="M0.5 4.5 H14.5 M0.5 9.5 H14.5 M5 0.5 V13.5 M10 0.5 V13.5" stroke="#777" stroke-width=".8"/><rect x="1" y="4.5" width="7" height="5" fill="#4f9be6" stroke="#2d8ae0" stroke-width="1"/><path d="M9.5 4.5 L14 9.5 M14 4.5 L9.5 9.5" stroke="#e81123" stroke-width="1.2"/></svg>
<div class="a" style="left:942.10px;top:106.25px;font-size:11.5px;line-height:11.5px;color:#2e2e2e;transform:scaleX(0.9303);transform-origin:0 0;-webkit-text-stroke:0.2px currentColor;">Excluir</div>
<svg style="left:990px;top:111px" width="6" height="4" viewBox="0 0 6 4"><path d="M0.5 0.5 L3.0 3.2 L5.5 0.5" fill="none" stroke="#333" stroke-width="1.1"/></svg>
<svg style="left:923px;top:129px" width="15" height="14" viewBox="0 0 15 14"><rect x="0.5" y="0.5" width="14" height="13" fill="#fff" stroke="#555" stroke-width="1"/><path d="M0.5 4.5 H14.5 M0.5 9.5 H14.5 M5 0.5 V13.5 M10 0.5 V13.5" stroke="#777" stroke-width=".8"/><rect x="3" y="3.5" width="9" height="7" fill="#4f9be6" stroke="#2d8ae0" stroke-width="1"/><path d="M2 -1.5 H13" stroke="#2d8ae0" stroke-width="1"/></svg>
<div class="a" style="left:942.10px;top:130.25px;font-size:11.5px;line-height:11.5px;color:#2e2e2e;transform:scaleX(0.9604);transform-origin:0 0;-webkit-text-stroke:0.2px currentColor;">Formatar</div>
<svg style="left:991px;top:134px" width="6" height="4" viewBox="0 0 6 4"><path d="M0.5 0.5 L3.0 3.2 L5.5 0.5" fill="none" stroke="#333" stroke-width="1.1"/></svg>
<svg style="left:1026px;top:81px" width="13" height="14" viewBox="0 0 13 14"><path d="M12.2 1.5 V0.7 H0.9 L6.6 7 L0.9 13.3 H12.2 V12.5" fill="none" stroke="#444" stroke-width="1.2" stroke-linejoin="round"/></svg>
<svg style="left:1052px;top:87px" width="6" height="4" viewBox="0 0 6 4"><path d="M0.5 0.5 L3.0 3.2 L5.5 0.5" fill="none" stroke="#333" stroke-width="1.1"/></svg>
<svg style="left:1025px;top:105px" width="15" height="14" viewBox="0 0 15 14"><rect x="0.5" y="0.5" width="14" height="13" fill="#fff" stroke="#555" stroke-width="1.1"/><path d="M0.5 3 H14.5" stroke="#555" stroke-width="1.2"/><path d="M7.5 5 V11 M5 8.5 L7.5 11 L10 8.5" fill="none" stroke="#2d8ae0" stroke-width="1.1"/></svg>
<svg style="left:1046px;top:111px" width="6" height="4" viewBox="0 0 6 4"><path d="M0.5 0.5 L3.0 3.2 L5.5 0.5" fill="none" stroke="#333" stroke-width="1.1"/></svg>
<svg style="left:1025px;top:129px" width="15" height="15" viewBox="0 0 15 15"><path d="M0.8 9 L8.5 1.3 L14 6.8 L6.3 14.5 Z" fill="#fff" stroke="#a23fbe" stroke-width="1.2" stroke-linejoin="round"/><path d="M0.8 9 L4 5.8 L9.5 11.3 L6.3 14.5 Z" fill="#c58ad6" stroke="#a23fbe" stroke-width="1.2" stroke-linejoin="round"/></svg>
<svg style="left:1046px;top:135px" width="6" height="4" viewBox="0 0 6 4"><path d="M0.5 0.5 L3.0 3.2 L5.5 0.5" fill="none" stroke="#333" stroke-width="1.1"/></svg>
<svg style="left:1081px;top:82.6px" width="27" height="25" viewBox="0 0 27 25">
<path d="M0.6 11 L4.6 0.6 L8.6 11 M2 7.4 H7.2" fill="none" stroke="#2d8ae0" stroke-width="1.25"/>
<path d="M0.6 13.9 H7.9 L0.6 23.6 H8.2" fill="none" stroke="#444" stroke-width="1.25" stroke-linejoin="round"/>
<path d="M11.6 6.3 H25.7 V7.8 L20.2 13.4 V20.2 H16.8 V13.4 L11.6 7.8 Z" fill="#f6f6f6" stroke="#444" stroke-width="1.2" stroke-linejoin="round"/>
</svg>
<div class="a" style="left:1069.50px;top:113.75px;font-size:11.5px;line-height:11.5px;color:#2e2e2e;transform:scaleX(0.9277);transform-origin:0 0;-webkit-text-stroke:0.2px currentColor;">Classificar</div>
<div class="a" style="left:1070.00px;top:128.55px;font-size:11.5px;line-height:11.5px;color:#2e2e2e;transform:scaleX(1.0442);transform-origin:0 0;-webkit-text-stroke:0.2px currentColor;">e Filtrar</div>
<svg style="left:1112.7px;top:132.4px" width="4" height="3" viewBox="0 0 4 3"><path d="M0.5 0.5 L2.0 2.2 L3.5 0.5" fill="none" stroke="#333" stroke-width="1"/></svg>
<svg style="left:1141px;top:81px" width="30" height="28" viewBox="0 0 30 28"><circle cx="18" cy="10.3" r="9.3" fill="#f6f6f6" stroke="#444" stroke-width="1.2"/><path d="M11 17.6 L1 27.6" stroke="#444" stroke-width="1.3"/></svg>
<div class="a" style="left:1128.70px;top:113.75px;font-size:11.5px;line-height:11.5px;color:#2e2e2e;transform:scaleX(0.9584);transform-origin:0 0;-webkit-text-stroke:0.2px currentColor;">Localizar e</div>
<div class="a" style="left:1124.30px;top:128.55px;font-size:11.5px;line-height:11.5px;color:#2e2e2e;transform:scaleX(0.9514);transform-origin:0 0;-webkit-text-stroke:0.2px currentColor;">Selecionar</div>
<svg style="left:1180px;top:132.4px" width="4" height="3" viewBox="0 0 4 3"><path d="M0.5 0.5 L2.0 2.2 L3.5 0.5" fill="none" stroke="#333" stroke-width="1"/></svg>
<svg style="left:1224px;top:81px" width="28" height="27" viewBox="0 0 28 27"><rect x="0.7" y="0.7" width="26.6" height="25.6" fill="none" stroke="#d24726" stroke-width="1.4"/><rect x="3.7" y="3.7" width="9" height="8.5" fill="none" stroke="#d24726" stroke-width="1.3"/><rect x="15.2" y="3.7" width="9" height="8.5" fill="none" stroke="#d24726" stroke-width="1.3"/><rect x="3.7" y="14.5" width="9" height="8.5" fill="none" stroke="#d24726" stroke-width="1.3"/><rect x="15.2" y="14.5" width="9" height="8.5" fill="none" stroke="#d24726" stroke-width="1.3"/></svg>
<div class="a" style="left:1205.70px;top:113.55px;font-size:11.5px;line-height:11.5px;color:#2e2e2e;transform:scaleX(0.9624);transform-origin:0 0;-webkit-text-stroke:0.2px currentColor;">Suplementos</div>
<svg style="left:1294.2px;top:82px" width="28" height="25.2" viewBox="0 0 28 25.2">
<defs><linearGradient id="cla" x1="0" y1="0" x2="0" y2="1"><stop offset="0" stop-color="#1aa2f4"/><stop offset=".55" stop-color="#3aae6a"/><stop offset="1" stop-color="#f4c400"/></linearGradient>
<linearGradient id="cra" x1="0" y1="0" x2="0" y2="1"><stop offset="0" stop-color="#a64ff0"/><stop offset=".5" stop-color="#ee5a90"/><stop offset="1" stop-color="#fb9c50"/></linearGradient></defs>
<path d="M4.8 0 H19.3 Q21.6 0 22.3 7.1 H17.7 L11 18.1 H2 Q0 18.1 0.3 15.8 L3 3 Q3.7 0 4.8 0 Z" fill="url(#cla)"/>
<path d="M14.5 0 H19.3 Q21.6 0 22.3 7.1 H17.7 Z" fill="#1c4fd6" opacity=".85"/>
<path d="M17.7 7.1 H25.6 Q28 7.1 27.7 9.6 L25.1 22.4 Q24.5 25.2 21.5 25.2 H9.8 Q7.6 25.2 7.1 22.2 L6.2 18.1 H14.2 Z" fill="url(#cra)"/>
<path d="M6.2 18.1 H13.5 L11.2 25.2 H9.8 Q7.6 25.2 7.1 22.2 Z" fill="#f4582e" opacity=".9"/>
</svg>
<div class="a" style="left:1289.30px;top:113.55px;font-size:11.5px;line-height:11.5px;color:#2e2e2e;transform:scaleX(1.0140);transform-origin:0 0;-webkit-text-stroke:0.2px currentColor;">Copilot</div>
<svg style="left:1363.4px;top:83.1px" width="28" height="28" viewBox="0 0 28 28">
<path d="M18.2 12.4 V5.1 L13.1 0.65 H3 Q0.65 0.65 0.65 3 V19.3 Q0.65 21.6 3 21.6 H8.6" fill="none" stroke="#3d7fe6" stroke-width="1.35" stroke-linejoin="round"/>
<path d="M8.7 5 Q9.2 10.5 3.5 15.3 M8.6 10.2 Q10.5 13 14 13.3" fill="none" stroke="#3d7fe6" stroke-width="1.05"/>
<rect x="-2.5" y="-4.6" width="5" height="9.2" rx="2.5" transform="translate(19.8 16.2) rotate(45)" fill="none" stroke="#3d7fe6" stroke-width="1.35"/>
<path d="M12.8 18.6 L10.9 20.5 Q9.2 22.2 10.9 23.9 Q12.6 25.6 14.3 23.9 L16.2 22" fill="none" stroke="#3d7fe6" stroke-width="1.35"/>
</svg>
<div class="a" style="left:1362.00px;top:113.55px;font-size:11.5px;line-height:11.5px;color:#2e2e2e;transform:scaleX(0.9248);transform-origin:0 0;-webkit-text-stroke:0.2px currentColor;">Crie</div>
<div class="a" style="left:1352.40px;top:128.35px;font-size:11.5px;line-height:11.5px;color:#2e2e2e;transform:scaleX(0.9035);transform-origin:0 0;-webkit-text-stroke:0.2px currentColor;">um PDF</div>
<div class="a" style="left:7.7px;top:175px;width:124.5px;height:21.3px;background:#fff;border-radius:4px;box-shadow:0 0.5px 1px rgba(0,0,0,.12)"></div>
<div class="a" style="left:11.60px;top:179.80px;font-size:13px;line-height:13px;color:#222;transform:scaleX(0.8791);transform-origin:0 0;-webkit-text-stroke:0.2px currentColor;">O24</div>
<svg style="left:118px;top:184px" width="10" height="6" viewBox="0 0 10 6"><path d="M0.7 0.7 L5 5 L9.3 0.7" fill="none" stroke="#333" stroke-width="1.2"/></svg>
<div class="a" style="left:141.8px;top:181.5px;width:2px;height:2px;border-radius:1px;background:#222"></div>
<div class="a" style="left:141.8px;top:185.5px;width:2px;height:2px;border-radius:1px;background:#222"></div>
<div class="a" style="left:141.8px;top:189.5px;width:2px;height:2px;border-radius:1px;background:#222"></div>
<div class="a" style="left:152.8px;top:175px;width:79.4px;height:21.3px;background:#fff;border-radius:4px;box-shadow:0 0.5px 1px rgba(0,0,0,.12)"></div>
<svg style="left:159px;top:180px" width="11" height="11" viewBox="0 0 11 11"><path d="M0.5 0.5 L10.5 10.5 M10.5 0.5 L0.5 10.5" stroke="#8a8a8a" stroke-width="1"/></svg>
<svg style="left:179px;top:180px" width="15" height="11" viewBox="0 0 15 11"><path d="M0.5 5.5 L5.2 10.2 L14.5 0.8" fill="none" stroke="#8a8a8a" stroke-width="1"/></svg>
<div class="a" style="left:202px;top:177px;font-family:&quot;Liberation Serif&quot;,serif;font-style:italic;font-size:15px;line-height:15px;color:#222;letter-spacing:-0.5px">fx</div>
<svg style="left:221px;top:184px" width="9" height="5" viewBox="0 0 9 5"><path d="M0.5 0.5 L4.5 4.5 L8.5 0.5" fill="none" stroke="#777" stroke-width="1"/></svg>
<div class="a" style="left:236.8px;top:175px;width:1199px;height:21.3px;background:#fff;border-radius:4px;box-shadow:0 0.5px 1px rgba(0,0,0,.12)"></div>
<svg style="left:1423px;top:182px" width="11" height="6" viewBox="0 0 11 6"><path d="M0.7 0.7 L5.5 5.2 L10.3 0.7" fill="none" stroke="#333" stroke-width="1.1"/></svg>
<div class="a" style="left:0;top:203px;width:1425.5px;height:15px;background:#f0f0f0"></div>
<div class="a" style="left:0;top:217px;width:1425.5px;height:1px;background:#bfbfbf"></div>
<svg style="left:7.8px;top:206.5px" width="8.2" height="8.3" viewBox="0 0 8.2 8.3"><path d="M8.2 0 V8.3 H0 Z" fill="#d4d4d4"/></svg>
<div class="a" style="left:1257px;top:203px;width:61px;height:15px;background:#d3d3d3"></div>
<div class="a" style="left:1257px;top:216px;width:61px;height:2px;background:#217346"></div>
<div class="a" style="left:30.0px;top:205px;width:1px;height:12px;background:#d2d2d2"></div>
<div class="a" style="left:21.16px;top:205.60px;font-size:10px;line-height:10px;color:#555;-webkit-text-stroke:0.2px currentColor;">A</div>
<div class="a" style="left:100.0px;top:205px;width:1px;height:12px;background:#d2d2d2"></div>
<div class="a" style="left:62.16px;top:205.60px;font-size:10px;line-height:10px;color:#555;-webkit-text-stroke:0.2px currentColor;">B</div>
<div class="a" style="left:173.0px;top:205px;width:1px;height:12px;background:#d2d2d2"></div>
<div class="a" style="left:133.39px;top:205.60px;font-size:10px;line-height:10px;color:#555;-webkit-text-stroke:0.2px currentColor;">C</div>
<div class="a" style="left:308.0px;top:205px;width:1px;height:12px;background:#d2d2d2"></div>
<div class="a" style="left:237.39px;top:205.60px;font-size:10px;line-height:10px;color:#555;-webkit-text-stroke:0.2px currentColor;">D</div>
<div class="a" style="left:404.0px;top:205px;width:1px;height:12px;background:#d2d2d2"></div>
<div class="a" style="left:353.17px;top:205.60px;font-size:10px;line-height:10px;color:#555;-webkit-text-stroke:0.2px currentColor;">E</div>
<div class="a" style="left:493.0px;top:205px;width:1px;height:12px;background:#d2d2d2"></div>
<div class="a" style="left:445.95px;top:205.60px;font-size:10px;line-height:10px;color:#555;-webkit-text-stroke:0.2px currentColor;">F</div>
<div class="a" style="left:537.0px;top:205px;width:1px;height:12px;background:#d2d2d2"></div>
<div class="a" style="left:511.61px;top:205.60px;font-size:10px;line-height:10px;color:#555;-webkit-text-stroke:0.2px currentColor;">G</div>
<div class="a" style="left:621.0px;top:205px;width:1px;height:12px;background:#d2d2d2"></div>
<div class="a" style="left:575.89px;top:205.60px;font-size:10px;line-height:10px;color:#555;-webkit-text-stroke:0.2px currentColor;">H</div>
<div class="a" style="left:705.5px;top:205px;width:1px;height:12px;background:#d2d2d2"></div>
<div class="a" style="left:662.36px;top:205.60px;font-size:10px;line-height:10px;color:#555;-webkit-text-stroke:0.2px currentColor;">I</div>
<div class="a" style="left:790.0px;top:205px;width:1px;height:12px;background:#d2d2d2"></div>
<div class="a" style="left:745.75px;top:205.60px;font-size:10px;line-height:10px;color:#555;-webkit-text-stroke:0.2px currentColor;">J</div>
<div class="a" style="left:895.0px;top:205px;width:1px;height:12px;background:#d2d2d2"></div>
<div class="a" style="left:839.66px;top:205.60px;font-size:10px;line-height:10px;color:#555;-webkit-text-stroke:0.2px currentColor;">K</div>
<div class="a" style="left:1027.5px;top:205px;width:1px;height:12px;background:#d2d2d2"></div>
<div class="a" style="left:958.97px;top:205.60px;font-size:10px;line-height:10px;color:#555;-webkit-text-stroke:0.2px currentColor;">L</div>
<div class="a" style="left:1127.5px;top:205px;width:1px;height:12px;background:#d2d2d2"></div>
<div class="a" style="left:1073.83px;top:205.60px;font-size:10px;line-height:10px;color:#555;-webkit-text-stroke:0.2px currentColor;">M</div>
<div class="a" style="left:1256.5px;top:205px;width:1px;height:12px;background:#d2d2d2"></div>
<div class="a" style="left:1188.89px;top:205.60px;font-size:10px;line-height:10px;color:#555;-webkit-text-stroke:0.2px currentColor;">N</div>
<div class="a" style="left:1317.5px;top:205px;width:1px;height:12px;background:#d2d2d2"></div>
<div class="a" style="left:1283.61px;top:205.60px;font-size:10px;line-height:10px;color:#217346;-webkit-text-stroke:0.2px currentColor;">O</div>
<div class="a" style="left:1402.5px;top:205px;width:1px;height:12px;background:#d2d2d2"></div>
<div class="a" style="left:1356.89px;top:205.60px;font-size:10px;line-height:10px;color:#555;-webkit-text-stroke:0.2px currentColor;">R</div>
<div class="a" style="left:1425.0px;top:205px;width:1px;height:12px;background:#d2d2d2"></div>
<div class="a" style="left:18px;top:203px;width:1px;height:15px;background:#d2d2d2"></div>
<div class="a" style="left:19px;top:218px;width:1406.5px;height:499px;background:#fff"></div>
<div class="a" style="left:0;top:218px;width:18.5px;height:499px;background:#f0f0f0"></div>
<div class="a" style="left:18px;top:218px;width:1px;height:499px;background:#c6c6c6"></div>
<div class="a" style="left:0;top:588.20px;width:18px;height:14.35px;background:#e0e0e0;border-top:1px solid #cfcfcf;border-bottom:1px solid #cfcfcf"></div>
<div class="a" style="left:0;top:232.50px;width:18px;height:1px;background:#dcdcdc"></div>
<div class="a" style="left:6.47px;top:221.30px;font-size:9.8px;line-height:9.8px;color:#555;-webkit-text-stroke:0.2px currentColor;">1</div>
<div class="a" style="left:0;top:270.50px;width:18px;height:1px;background:#dcdcdc"></div>
<div class="a" style="left:6.47px;top:259.30px;font-size:9.8px;line-height:9.8px;color:#555;-webkit-text-stroke:0.2px currentColor;">2</div>
<div class="a" style="left:0;top:300.80px;width:18px;height:1px;background:#dcdcdc"></div>
<div class="a" style="left:6.47px;top:289.60px;font-size:9.8px;line-height:9.8px;color:#555;-webkit-text-stroke:0.2px currentColor;">3</div>
<div class="a" style="left:0;top:315.15px;width:18px;height:1px;background:#dcdcdc"></div>
<div class="a" style="left:6.47px;top:303.95px;font-size:9.8px;line-height:9.8px;color:#555;-webkit-text-stroke:0.2px currentColor;">4</div>
<div class="a" style="left:0;top:329.49px;width:18px;height:1px;background:#dcdcdc"></div>
<div class="a" style="left:6.47px;top:318.29px;font-size:9.8px;line-height:9.8px;color:#555;-webkit-text-stroke:0.2px currentColor;">5</div>
<div class="a" style="left:0;top:343.84px;width:18px;height:1px;background:#dcdcdc"></div>
<div class="a" style="left:6.47px;top:332.64px;font-size:9.8px;line-height:9.8px;color:#555;-webkit-text-stroke:0.2px currentColor;">6</div>
<div class="a" style="left:0;top:358.18px;width:18px;height:1px;background:#dcdcdc"></div>
<div class="a" style="left:6.47px;top:346.98px;font-size:9.8px;line-height:9.8px;color:#555;-webkit-text-stroke:0.2px currentColor;">7</div>
<div class="a" style="left:0;top:372.53px;width:18px;height:1px;background:#dcdcdc"></div>
<div class="a" style="left:6.47px;top:361.33px;font-size:9.8px;line-height:9.8px;color:#555;-webkit-text-stroke:0.2px currentColor;">8</div>
<div class="a" style="left:0;top:386.87px;width:18px;height:1px;background:#dcdcdc"></div>
<div class="a" style="left:6.47px;top:375.67px;font-size:9.8px;line-height:9.8px;color:#555;-webkit-text-stroke:0.2px currentColor;">9</div>
<div class="a" style="left:0;top:401.22px;width:18px;height:1px;background:#dcdcdc"></div>
<div class="a" style="left:3.75px;top:390.02px;font-size:9.8px;line-height:9.8px;color:#555;-webkit-text-stroke:0.2px currentColor;">10</div>
<div class="a" style="left:0;top:415.56px;width:18px;height:1px;background:#dcdcdc"></div>
<div class="a" style="left:4.11px;top:404.36px;font-size:9.8px;line-height:9.8px;color:#555;-webkit-text-stroke:0.2px currentColor;">11</div>
<div class="a" style="left:0;top:429.91px;width:18px;height:1px;background:#dcdcdc"></div>
<div class="a" style="left:3.75px;top:418.71px;font-size:9.8px;line-height:9.8px;color:#555;-webkit-text-stroke:0.2px currentColor;">12</div>
<div class="a" style="left:0;top:444.25px;width:18px;height:1px;background:#dcdcdc"></div>
<div class="a" style="left:3.75px;top:433.05px;font-size:9.8px;line-height:9.8px;color:#555;-webkit-text-stroke:0.2px currentColor;">13</div>
<div class="a" style="left:0;top:458.60px;width:18px;height:1px;background:#dcdcdc"></div>
<div class="a" style="left:3.75px;top:447.40px;font-size:9.8px;line-height:9.8px;color:#555;-webkit-text-stroke:0.2px currentColor;">14</div>
<div class="a" style="left:0;top:472.94px;width:18px;height:1px;background:#dcdcdc"></div>
<div class="a" style="left:3.75px;top:461.74px;font-size:9.8px;line-height:9.8px;color:#555;-webkit-text-stroke:0.2px currentColor;">15</div>
<div class="a" style="left:0;top:487.29px;width:18px;height:1px;background:#dcdcdc"></div>
<div class="a" style="left:3.75px;top:476.09px;font-size:9.8px;line-height:9.8px;color:#555;-webkit-text-stroke:0.2px currentColor;">16</div>
<div class="a" style="left:0;top:501.63px;width:18px;height:1px;background:#dcdcdc"></div>
<div class="a" style="left:3.75px;top:490.43px;font-size:9.8px;line-height:9.8px;color:#555;-webkit-text-stroke:0.2px currentColor;">17</div>
<div class="a" style="left:0;top:515.98px;width:18px;height:1px;background:#dcdcdc"></div>
<div class="a" style="left:3.75px;top:504.78px;font-size:9.8px;line-height:9.8px;color:#555;-webkit-text-stroke:0.2px currentColor;">18</div>
<div class="a" style="left:0;top:530.32px;width:18px;height:1px;background:#dcdcdc"></div>
<div class="a" style="left:3.75px;top:519.12px;font-size:9.8px;line-height:9.8px;color:#555;-webkit-text-stroke:0.2px currentColor;">19</div>
<div class="a" style="left:0;top:544.67px;width:18px;height:1px;background:#dcdcdc"></div>
<div class="a" style="left:3.75px;top:533.47px;font-size:9.8px;line-height:9.8px;color:#555;-webkit-text-stroke:0.2px currentColor;">20</div>
<div class="a" style="left:0;top:559.01px;width:18px;height:1px;background:#dcdcdc"></div>
<div class="a" style="left:3.75px;top:547.81px;font-size:9.8px;line-height:9.8px;color:#555;-webkit-text-stroke:0.2px currentColor;">21</div>
<div class="a" style="left:0;top:573.36px;width:18px;height:1px;background:#dcdcdc"></div>
<div class="a" style="left:3.75px;top:562.16px;font-size:9.8px;line-height:9.8px;color:#555;-webkit-text-stroke:0.2px currentColor;">22</div>
<div class="a" style="left:3.75px;top:576.50px;font-size:9.8px;line-height:9.8px;color:#555;-webkit-text-stroke:0.2px currentColor;">23</div>
<div class="a" style="left:3.75px;top:590.85px;font-size:9.8px;line-height:9.8px;color:#217346;-webkit-text-stroke:0.2px currentColor;">24</div>
<div class="a" style="left:0;top:616.39px;width:18px;height:1px;background:#dcdcdc"></div>
<div class="a" style="left:3.75px;top:605.19px;font-size:9.8px;line-height:9.8px;color:#555;-webkit-text-stroke:0.2px currentColor;">25</div>
<div class="a" style="left:0;top:630.74px;width:18px;height:1px;background:#dcdcdc"></div>
<div class="a" style="left:3.75px;top:619.54px;font-size:9.8px;line-height:9.8px;color:#555;-webkit-text-stroke:0.2px currentColor;">26</div>
<div class="a" style="left:0;top:645.08px;width:18px;height:1px;background:#dcdcdc"></div>
<div class="a" style="left:3.75px;top:633.88px;font-size:9.8px;line-height:9.8px;color:#555;-webkit-text-stroke:0.2px currentColor;">27</div>
<div class="a" style="left:0;top:659.43px;width:18px;height:1px;background:#dcdcdc"></div>
<div class="a" style="left:3.75px;top:648.23px;font-size:9.8px;line-height:9.8px;color:#555;-webkit-text-stroke:0.2px currentColor;">28</div>
<div class="a" style="left:0;top:673.77px;width:18px;height:1px;background:#dcdcdc"></div>
<div class="a" style="left:3.75px;top:662.57px;font-size:9.8px;line-height:9.8px;color:#555;-webkit-text-stroke:0.2px currentColor;">29</div>
<div class="a" style="left:0;top:688.12px;width:18px;height:1px;background:#dcdcdc"></div>
<div class="a" style="left:3.75px;top:676.92px;font-size:9.8px;line-height:9.8px;color:#555;-webkit-text-stroke:0.2px currentColor;">30</div>
<div class="a" style="left:0;top:702.46px;width:18px;height:1px;background:#dcdcdc"></div>
<div class="a" style="left:3.75px;top:691.26px;font-size:9.8px;line-height:9.8px;color:#555;-webkit-text-stroke:0.2px currentColor;">31</div>
<div class="a" style="left:0;top:716.81px;width:18px;height:1px;background:#dcdcdc"></div>
<div class="a" style="left:3.75px;top:705.61px;font-size:9.8px;line-height:9.8px;color:#555;-webkit-text-stroke:0.2px currentColor;">32</div>
<div class="a" style="left:17px;top:588.20px;width:2px;height:14.35px;background:#217346"></div>
<div class="a" style="left:0;top:301px;width:30.5px;height:1px;background:#a9a9a9"></div>
<div class="a" style="left:42.50px;top:228.20px;font-size:28px;line-height:28px;color:#000;font-weight:bold;transform:scaleX(0.9731);transform-origin:0 0;-webkit-text-stroke:0.6px #000;">CONTAS A PAGAR</div>
<div class="a" style="left:30.5px;top:270.7px;width:1395px;height:30.6px;background:#000"></div>
<div class="a" style="left:1128px;top:269.8px;width:297.5px;height:2px;background:#000"></div>
<div class="a" style="left:99.9px;top:271px;width:1.2px;height:30px;background:#8c8c8c"></div>
<div class="a" style="left:172.9px;top:271px;width:1.2px;height:30px;background:#8c8c8c"></div>
<div class="a" style="left:307.9px;top:271px;width:1.2px;height:30px;background:#8c8c8c"></div>
<div class="a" style="left:403.9px;top:271px;width:1.2px;height:30px;background:#8c8c8c"></div>
<div class="a" style="left:492.9px;top:271px;width:1.2px;height:30px;background:#8c8c8c"></div>
<div class="a" style="left:536.9px;top:271px;width:1.2px;height:30px;background:#8c8c8c"></div>
<div class="a" style="left:620.9px;top:271px;width:1.2px;height:30px;background:#8c8c8c"></div>
<div class="a" style="left:705.4px;top:271px;width:1.2px;height:30px;background:#8c8c8c"></div>
<div class="a" style="left:789.9px;top:271px;width:1.2px;height:30px;background:#8c8c8c"></div>
<div class="a" style="left:894.9px;top:271px;width:1.2px;height:30px;background:#8c8c8c"></div>
<div class="a" style="left:1027.4px;top:271px;width:1.2px;height:30px;background:#8c8c8c"></div>
<div class="a" style="left:39.20px;top:281.05px;font-size:12.3px;line-height:12.3px;color:#fff;font-weight:bold;transform:scaleX(0.9047);transform-origin:0 0;-webkit-text-stroke:0.25px #fff;">Empresas</div>
<div class="a" style="left:126.20px;top:272.95px;font-size:12.3px;line-height:12.3px;color:#fff;font-weight:bold;transform:scaleX(0.9327);transform-origin:0 0;-webkit-text-stroke:0.25px #fff;">Cod</div>
<div class="a" style="left:105.30px;top:287.45px;font-size:12.3px;line-height:12.3px;color:#fff;font-weight:bold;transform:scaleX(0.9385);transform-origin:0 0;-webkit-text-stroke:0.25px #fff;">Fornecedor</div>
<div class="a" style="left:191.00px;top:281.05px;font-size:12.3px;line-height:12.3px;color:#fff;font-weight:bold;transform:scaleX(0.9539);transform-origin:0 0;-webkit-text-stroke:0.25px #fff;">Nome Fornecedor</div>
<div class="a" style="left:332.20px;top:281.05px;font-size:12.3px;line-height:12.3px;color:#fff;font-weight:bold;transform:scaleX(0.9907);transform-origin:0 0;-webkit-text-stroke:0.25px #fff;">Telefone</div>
<div class="a" style="left:425.90px;top:281.05px;font-size:12.3px;line-height:12.3px;color:#fff;font-weight:bold;transform:scaleX(0.9883);transform-origin:0 0;-webkit-text-stroke:0.25px #fff;">N°Titulo</div>
<div class="a" style="left:495.00px;top:281.05px;font-size:12.3px;line-height:12.3px;color:#fff;font-weight:bold;transform:scaleX(0.9481);transform-origin:0 0;-webkit-text-stroke:0.25px #fff;">Parcela</div>
<div class="a" style="left:564.70px;top:281.05px;font-size:12.3px;line-height:12.3px;color:#fff;font-weight:bold;transform:scaleX(0.9939);transform-origin:0 0;-webkit-text-stroke:0.25px #fff;">Valor</div>
<div class="a" style="left:622.20px;top:281.05px;font-size:12.3px;line-height:12.3px;color:#fff;font-weight:bold;transform:scaleX(0.9466);transform-origin:0 0;-webkit-text-stroke:0.25px #fff;">Juros ou Multa</div>
<div class="a" style="left:716.90px;top:281.05px;font-size:12.3px;line-height:12.3px;color:#fff;font-weight:bold;transform:scaleX(0.9908);transform-origin:0 0;-webkit-text-stroke:0.25px #fff;">Valor Total</div>
<div class="a" style="left:796.30px;top:281.05px;font-size:12.3px;line-height:12.3px;color:#fff;font-weight:bold;transform:scaleX(0.9681);transform-origin:0 0;-webkit-text-stroke:0.25px #fff;">Data Pagamento</div>
<div class="a" style="left:924.50px;top:281.05px;font-size:12.3px;line-height:12.3px;color:#fff;font-weight:bold;transform:scaleX(0.9382);transform-origin:0 0;-webkit-text-stroke:0.25px #fff;">Tipo de conta</div>
<div class="a" style="left:1051.30px;top:281.05px;font-size:12.3px;line-height:12.3px;color:#fff;font-weight:bold;transform:scaleX(0.9302);transform-origin:0 0;-webkit-text-stroke:0.25px #fff;">Descrição</div>
<div class="a" style="left:1130.50px;top:281.05px;font-size:12.3px;line-height:12.3px;color:#fff;font-weight:bold;transform:scaleX(0.9385);transform-origin:0 0;-webkit-text-stroke:0.25px #fff;">Formas de Pagamento</div>
<div class="a" style="left:1270.40px;top:281.05px;font-size:12.3px;line-height:12.3px;color:#fff;font-weight:bold;transform:scaleX(0.9364);transform-origin:0 0;-webkit-text-stroke:0.25px #fff;">Status</div>
<div class="a" style="left:1331.50px;top:281.05px;font-size:12.3px;line-height:12.3px;color:#fff;font-weight:bold;transform:scaleX(0.9234);transform-origin:0 0;-webkit-text-stroke:0.25px #fff;">Valor Pago</div>
<div style="position:absolute;left:1405.3px;top:0;width:20px;height:770px;overflow:hidden"><div class="a" style="left:0.00px;top:281.05px;font-size:12.3px;line-height:12.3px;color:#fff;font-weight:bold;transform:scaleX(0.9972);transform-origin:0 0;-webkit-text-stroke:0.25px #fff;">Valor</div></div>
<div class="a" style="left:1028.5px;top:301px;width:99.5px;height:1.3px;background:#5b9bd5"></div>
<div class="a" style="left:175px;top:303px;width:132px;height:13px;background:#efefef"></div>
<div class="a" style="left:708px;top:303px;width:81px;height:13px;background:#efefef"></div>
<div class="a" style="left:1320px;top:303px;width:82px;height:13px;background:#efefef"></div>
<div class="a" style="left:1405px;top:303px;width:19px;height:13px;background:#efefef"></div>
<div class="a" style="left:175px;top:318px;width:132px;height:12px;background:#efefef"></div>
<div class="a" style="left:708px;top:318px;width:81px;height:12px;background:#efefef"></div>
<div class="a" style="left:1320px;top:318px;width:82px;height:12px;background:#efefef"></div>
<div class="a" style="left:1405px;top:318px;width:19px;height:12px;background:#efefef"></div>
<div class="a" style="left:175px;top:332px;width:132px;height:13px;background:#efefef"></div>
<div class="a" style="left:708px;top:332px;width:81px;height:13px;background:#efefef"></div>
<div class="a" style="left:1320px;top:332px;width:82px;height:13px;background:#efefef"></div>
<div class="a" style="left:1405px;top:332px;width:19px;height:13px;background:#efefef"></div>
<div class="a" style="left:175px;top:347px;width:132px;height:12px;background:#efefef"></div>
<div class="a" style="left:708px;top:347px;width:81px;height:12px;background:#efefef"></div>
<div class="a" style="left:1320px;top:347px;width:82px;height:12px;background:#efefef"></div>
<div class="a" style="left:1405px;top:347px;width:19px;height:12px;background:#efefef"></div>
<div class="a" style="left:175px;top:361px;width:132px;height:12px;background:#efefef"></div>
<div class="a" style="left:708px;top:361px;width:81px;height:12px;background:#efefef"></div>
<div class="a" style="left:1320px;top:361px;width:82px;height:12px;background:#efefef"></div>
<div class="a" style="left:1405px;top:361px;width:19px;height:12px;background:#efefef"></div>
<div class="a" style="left:30px;top:301px;width:1098px;height:1px;background:#7fb0dc"></div>
<div class="a" style="left:30px;top:316px;width:1395.5px;height:1px;background:#1a1a1a"></div>
<div class="a" style="left:30px;top:330px;width:1395.5px;height:1px;background:#1a1a1a"></div>
<div class="a" style="left:30px;top:345px;width:1395.5px;height:1px;background:#1a1a1a"></div>
<div class="a" style="left:30px;top:359px;width:1395.5px;height:1px;background:#1a1a1a"></div>
<div class="a" style="left:30px;top:373px;width:1395.5px;height:1px;background:#1a1a1a"></div>
<div class="a" style="left:30px;top:302px;width:1px;height:72px;background:#1a1a1a"></div>
<div class="a" style="left:100px;top:302px;width:1px;height:72px;background:#1a1a1a"></div>
<div class="a" style="left:173px;top:302px;width:1px;height:72px;background:#1a1a1a"></div>
<div class="a" style="left:308px;top:302px;width:1px;height:72px;background:#1a1a1a"></div>
<div class="a" style="left:404px;top:302px;width:1px;height:72px;background:#1a1a1a"></div>
<div class="a" style="left:493px;top:302px;width:1px;height:72px;background:#1a1a1a"></div>
<div class="a" style="left:537px;top:302px;width:1px;height:72px;background:#1a1a1a"></div>
<div class="a" style="left:621px;top:302px;width:1px;height:72px;background:#1a1a1a"></div>
<div class="a" style="left:705px;top:302px;width:2px;height:72px;background:#4a4a4a"></div>
<div class="a" style="left:790px;top:302px;width:1px;height:72px;background:#4a4a4a"></div>
<div class="a" style="left:895px;top:302px;width:1px;height:72px;background:#1a1a1a"></div>
<div class="a" style="left:1028px;top:302px;width:1px;height:72px;background:#1a1a1a"></div>
<div class="a" style="left:1128px;top:302px;width:1px;height:72px;background:#1a1a1a"></div>
<div class="a" style="left:1257px;top:302px;width:1px;height:72px;background:#1a1a1a"></div>
<div class="a" style="left:1317px;top:302px;width:2px;height:72px;background:#4a4a4a"></div>
<div class="a" style="left:1402px;top:302px;width:1px;height:72px;background:#1a1a1a"></div>
<div class="a" style="left:56.03px;top:303.80px;font-size:11.2px;line-height:11.2px;color:#141414;transform:scaleX(0.8100);transform-origin:0 0;-webkit-text-stroke:0.15px currentColor;">GTU</div>
<div class="a" style="left:120.42px;top:303.80px;font-size:11.2px;line-height:11.2px;color:#141414;transform:scaleX(0.8550);transform-origin:0 0;-webkit-text-stroke:0.15px currentColor;">000932</div>
<div class="a" style="left:204.75px;top:303.80px;font-size:11.2px;line-height:11.2px;color:#141414;transform:scaleX(0.8100);transform-origin:0 0;-webkit-text-stroke:0.15px currentColor;">A LESSA JUNIOR</div>
<div class="a" style="left:512.34px;top:303.80px;font-size:11.2px;line-height:11.2px;color:#141414;transform:scaleX(0.8550);transform-origin:0 0;-webkit-text-stroke:0.15px currentColor;">3</div>
<div class="a" style="left:543.60px;top:303.80px;font-size:11.2px;line-height:11.2px;color:#141414;transform:scaleX(0.7820);transform-origin:0 0;-webkit-text-stroke:0.15px currentColor;">R$</div>
<div class="a" style="left:585.81px;top:303.80px;font-size:11.2px;line-height:11.2px;color:#141414;transform:scaleX(0.8550);transform-origin:0 0;-webkit-text-stroke:0.15px currentColor;">984,86</div>
<div class="a" style="left:712.80px;top:303.80px;font-size:11.2px;line-height:11.2px;color:#141414;transform:scaleX(0.7820);transform-origin:0 0;-webkit-text-stroke:0.15px currentColor;">R$</div>
<div class="a" style="left:754.81px;top:303.80px;font-size:11.2px;line-height:11.2px;color:#141414;transform:scaleX(0.8550);transform-origin:0 0;-webkit-text-stroke:0.15px currentColor;">984,86</div>
<div class="a" style="left:817.16px;top:303.80px;font-size:11.2px;line-height:11.2px;color:#141414;transform:scaleX(0.8900);transform-origin:0 0;-webkit-text-stroke:0.15px currentColor;">01/01/2025</div>
<div class="a" style="left:906.29px;top:303.80px;font-size:11.2px;line-height:11.2px;color:#141414;transform:scaleX(0.9400);transform-origin:0 0;-webkit-text-stroke:0.15px currentColor;">Despesa Administrativa</div>
<div class="a" style="left:1178.27px;top:303.80px;font-size:11.2px;line-height:11.2px;color:#141414;transform:scaleX(0.9400);transform-origin:0 0;-webkit-text-stroke:0.15px currentColor;">Boleto</div>
<div class="a" style="left:1264.12px;top:303.80px;font-size:11.2px;line-height:11.2px;color:#f5b335;transform:scaleX(0.9400);transform-origin:0 0;-webkit-text-stroke:0.15px currentColor;">Em aberto</div>
<div class="a" style="left:1325.00px;top:303.80px;font-size:11.2px;line-height:11.2px;color:#141414;transform:scaleX(0.7820);transform-origin:0 0;-webkit-text-stroke:0.15px currentColor;">R$</div>
<div class="a" style="left:1383.20px;top:303.80px;font-size:11.2px;line-height:11.2px;color:#141414;-webkit-text-stroke:0.2px currentColor;">-</div>
<div class="a" style="left:1409.50px;top:303.80px;font-size:11.2px;line-height:11.2px;color:#141414;transform:scaleX(0.7820);transform-origin:0 0;-webkit-text-stroke:0.15px currentColor;">R$</div>
<div class="a" style="left:48.46px;top:318.15px;font-size:11.2px;line-height:11.2px;color:#141414;transform:scaleX(0.8100);transform-origin:0 0;-webkit-text-stroke:0.15px currentColor;">SKORPI</div>
<div class="a" style="left:120.42px;top:318.15px;font-size:11.2px;line-height:11.2px;color:#141414;transform:scaleX(0.8550);transform-origin:0 0;-webkit-text-stroke:0.15px currentColor;">000763</div>
<div class="a" style="left:187.53px;top:318.15px;font-size:11.2px;line-height:11.2px;color:#141414;transform:scaleX(0.8100);transform-origin:0 0;-webkit-text-stroke:0.15px currentColor;">NEREU ALTMAYER E CIA</div>
<div class="a" style="left:512.34px;top:318.15px;font-size:11.2px;line-height:11.2px;color:#141414;transform:scaleX(0.8550);transform-origin:0 0;-webkit-text-stroke:0.15px currentColor;">1</div>
<div class="a" style="left:543.60px;top:318.15px;font-size:11.2px;line-height:11.2px;color:#141414;transform:scaleX(0.7820);transform-origin:0 0;-webkit-text-stroke:0.15px currentColor;">R$</div>
<div class="a" style="left:585.81px;top:318.15px;font-size:11.2px;line-height:11.2px;color:#141414;transform:scaleX(0.8550);transform-origin:0 0;-webkit-text-stroke:0.15px currentColor;">537,70</div>
<div class="a" style="left:628.60px;top:318.15px;font-size:11.2px;line-height:11.2px;color:#141414;transform:scaleX(0.7820);transform-origin:0 0;-webkit-text-stroke:0.15px currentColor;">R$</div>
<div class="a" style="left:670.41px;top:318.15px;font-size:11.2px;line-height:11.2px;color:#141414;transform:scaleX(0.8550);transform-origin:0 0;-webkit-text-stroke:0.15px currentColor;">145,00</div>
<div class="a" style="left:712.80px;top:318.15px;font-size:11.2px;line-height:11.2px;color:#141414;transform:scaleX(0.7820);transform-origin:0 0;-webkit-text-stroke:0.15px currentColor;">R$</div>
<div class="a" style="left:754.81px;top:318.15px;font-size:11.2px;line-height:11.2px;color:#141414;transform:scaleX(0.8550);transform-origin:0 0;-webkit-text-stroke:0.15px currentColor;">682,70</div>
<div class="a" style="left:817.16px;top:318.15px;font-size:11.2px;line-height:11.2px;color:#141414;transform:scaleX(0.8900);transform-origin:0 0;-webkit-text-stroke:0.15px currentColor;">01/02/2025</div>
<div class="a" style="left:906.29px;top:318.15px;font-size:11.2px;line-height:11.2px;color:#141414;transform:scaleX(0.9400);transform-origin:0 0;-webkit-text-stroke:0.15px currentColor;">Despesa Administrativa</div>
<div class="a" style="left:1161.21px;top:318.15px;font-size:11.2px;line-height:11.2px;color:#141414;transform:scaleX(0.9400);transform-origin:0 0;-webkit-text-stroke:0.15px currentColor;">Transferência</div>
<div class="a" style="left:1264.41px;top:318.15px;font-size:11.2px;line-height:11.2px;color:#f0162e;transform:scaleX(0.9400);transform-origin:0 0;-webkit-text-stroke:0.15px currentColor;">Em atraso</div>
<div class="a" style="left:1325.00px;top:318.15px;font-size:11.2px;line-height:11.2px;color:#141414;transform:scaleX(0.7820);transform-origin:0 0;-webkit-text-stroke:0.15px currentColor;">R$</div>
<div class="a" style="left:1383.20px;top:318.15px;font-size:11.2px;line-height:11.2px;color:#141414;-webkit-text-stroke:0.2px currentColor;">-</div>
<div class="a" style="left:1409.50px;top:318.15px;font-size:11.2px;line-height:11.2px;color:#141414;transform:scaleX(0.7820);transform-origin:0 0;-webkit-text-stroke:0.15px currentColor;">R$</div>
<div class="a" style="left:48.46px;top:332.50px;font-size:11.2px;line-height:11.2px;color:#141414;transform:scaleX(0.8100);transform-origin:0 0;-webkit-text-stroke:0.15px currentColor;">SKORPI</div>
<div class="a" style="left:120.42px;top:332.50px;font-size:11.2px;line-height:11.2px;color:#141414;transform:scaleX(0.8550);transform-origin:0 0;-webkit-text-stroke:0.15px currentColor;">000932</div>
<div class="a" style="left:204.75px;top:332.50px;font-size:11.2px;line-height:11.2px;color:#141414;transform:scaleX(0.8100);transform-origin:0 0;-webkit-text-stroke:0.15px currentColor;">A LESSA JUNIOR</div>
<div class="a" style="left:512.34px;top:332.50px;font-size:11.2px;line-height:11.2px;color:#141414;transform:scaleX(0.8550);transform-origin:0 0;-webkit-text-stroke:0.15px currentColor;">1</div>
<div class="a" style="left:543.60px;top:332.50px;font-size:11.2px;line-height:11.2px;color:#141414;transform:scaleX(0.7820);transform-origin:0 0;-webkit-text-stroke:0.15px currentColor;">R$</div>
<div class="a" style="left:585.81px;top:332.50px;font-size:11.2px;line-height:11.2px;color:#141414;transform:scaleX(0.8550);transform-origin:0 0;-webkit-text-stroke:0.15px currentColor;">537,70</div>
<div class="a" style="left:628.60px;top:332.50px;font-size:11.2px;line-height:11.2px;color:#141414;transform:scaleX(0.7820);transform-origin:0 0;-webkit-text-stroke:0.15px currentColor;">R$</div>
<div class="a" style="left:675.74px;top:332.50px;font-size:11.2px;line-height:11.2px;color:#141414;transform:scaleX(0.8550);transform-origin:0 0;-webkit-text-stroke:0.15px currentColor;">50,00</div>
<div class="a" style="left:712.80px;top:332.50px;font-size:11.2px;line-height:11.2px;color:#141414;transform:scaleX(0.7820);transform-origin:0 0;-webkit-text-stroke:0.15px currentColor;">R$</div>
<div class="a" style="left:754.81px;top:332.50px;font-size:11.2px;line-height:11.2px;color:#141414;transform:scaleX(0.8550);transform-origin:0 0;-webkit-text-stroke:0.15px currentColor;">587,70</div>
<div class="a" style="left:817.16px;top:332.50px;font-size:11.2px;line-height:11.2px;color:#141414;transform:scaleX(0.8900);transform-origin:0 0;-webkit-text-stroke:0.15px currentColor;">01/03/2025</div>
<div class="a" style="left:910.09px;top:332.50px;font-size:11.2px;line-height:11.2px;color:#141414;transform:scaleX(0.9400);transform-origin:0 0;-webkit-text-stroke:0.15px currentColor;">Despesa com Vendas</div>
<div class="a" style="left:1152.82px;top:332.50px;font-size:11.2px;line-height:11.2px;color:#141414;transform:scaleX(0.9400);transform-origin:0 0;-webkit-text-stroke:0.15px currentColor;">Cartão de crédito</div>
<div class="a" style="left:1276.11px;top:332.50px;font-size:11.2px;line-height:11.2px;color:#36b865;transform:scaleX(0.9400);transform-origin:0 0;-webkit-text-stroke:0.15px currentColor;">Pago</div>
<div class="a" style="left:1325.00px;top:332.50px;font-size:11.2px;line-height:11.2px;color:#141414;transform:scaleX(0.7820);transform-origin:0 0;-webkit-text-stroke:0.15px currentColor;">R$</div>
<div class="a" style="left:1368.01px;top:332.50px;font-size:11.2px;line-height:11.2px;color:#141414;transform:scaleX(0.8550);transform-origin:0 0;-webkit-text-stroke:0.15px currentColor;">587,70</div>
<div class="a" style="left:1409.50px;top:332.50px;font-size:11.2px;line-height:11.2px;color:#141414;transform:scaleX(0.7820);transform-origin:0 0;-webkit-text-stroke:0.15px currentColor;">R$</div>
<div class="a" style="left:48.46px;top:346.85px;font-size:11.2px;line-height:11.2px;color:#141414;transform:scaleX(0.8100);transform-origin:0 0;-webkit-text-stroke:0.15px currentColor;">SKORPI</div>
<div class="a" style="left:120.42px;top:346.85px;font-size:11.2px;line-height:11.2px;color:#141414;transform:scaleX(0.8550);transform-origin:0 0;-webkit-text-stroke:0.15px currentColor;">000763</div>
<div class="a" style="left:187.53px;top:346.85px;font-size:11.2px;line-height:11.2px;color:#141414;transform:scaleX(0.8100);transform-origin:0 0;-webkit-text-stroke:0.15px currentColor;">NEREU ALTMAYER E CIA</div>
<div class="a" style="left:512.34px;top:346.85px;font-size:11.2px;line-height:11.2px;color:#141414;transform:scaleX(0.8550);transform-origin:0 0;-webkit-text-stroke:0.15px currentColor;">1</div>
<div class="a" style="left:543.60px;top:346.85px;font-size:11.2px;line-height:11.2px;color:#141414;transform:scaleX(0.7820);transform-origin:0 0;-webkit-text-stroke:0.15px currentColor;">R$</div>
<div class="a" style="left:585.81px;top:346.85px;font-size:11.2px;line-height:11.2px;color:#141414;transform:scaleX(0.8550);transform-origin:0 0;-webkit-text-stroke:0.15px currentColor;">453,24</div>
<div class="a" style="left:628.60px;top:346.85px;font-size:11.2px;line-height:11.2px;color:#141414;transform:scaleX(0.7820);transform-origin:0 0;-webkit-text-stroke:0.15px currentColor;">R$</div>
<div class="a" style="left:675.74px;top:346.85px;font-size:11.2px;line-height:11.2px;color:#141414;transform:scaleX(0.8550);transform-origin:0 0;-webkit-text-stroke:0.15px currentColor;">45,00</div>
<div class="a" style="left:712.80px;top:346.85px;font-size:11.2px;line-height:11.2px;color:#141414;transform:scaleX(0.7820);transform-origin:0 0;-webkit-text-stroke:0.15px currentColor;">R$</div>
<div class="a" style="left:754.81px;top:346.85px;font-size:11.2px;line-height:11.2px;color:#141414;transform:scaleX(0.8550);transform-origin:0 0;-webkit-text-stroke:0.15px currentColor;">498,24</div>
<div class="a" style="left:817.16px;top:346.85px;font-size:11.2px;line-height:11.2px;color:#141414;transform:scaleX(0.8900);transform-origin:0 0;-webkit-text-stroke:0.15px currentColor;">01/04/2025</div>
<div class="a" style="left:907.17px;top:346.85px;font-size:11.2px;line-height:11.2px;color:#141414;transform:scaleX(0.9400);transform-origin:0 0;-webkit-text-stroke:0.15px currentColor;">Custo com embalagem</div>
<div class="a" style="left:1161.21px;top:346.85px;font-size:11.2px;line-height:11.2px;color:#141414;transform:scaleX(0.9400);transform-origin:0 0;-webkit-text-stroke:0.15px currentColor;">Transferência</div>
<div class="a" style="left:1276.11px;top:346.85px;font-size:11.2px;line-height:11.2px;color:#36b865;transform:scaleX(0.9400);transform-origin:0 0;-webkit-text-stroke:0.15px currentColor;">Pago</div>
<div class="a" style="left:1325.00px;top:346.85px;font-size:11.2px;line-height:11.2px;color:#141414;transform:scaleX(0.7820);transform-origin:0 0;-webkit-text-stroke:0.15px currentColor;">R$</div>
<div class="a" style="left:1368.01px;top:346.85px;font-size:11.2px;line-height:11.2px;color:#141414;transform:scaleX(0.8550);transform-origin:0 0;-webkit-text-stroke:0.15px currentColor;">498,24</div>
<div class="a" style="left:1409.50px;top:346.85px;font-size:11.2px;line-height:11.2px;color:#141414;transform:scaleX(0.7820);transform-origin:0 0;-webkit-text-stroke:0.15px currentColor;">R$</div>
<div class="a" style="left:48.46px;top:361.20px;font-size:11.2px;line-height:11.2px;color:#141414;transform:scaleX(0.8100);transform-origin:0 0;-webkit-text-stroke:0.15px currentColor;">SKORPI</div>
<div class="a" style="left:120.42px;top:361.20px;font-size:11.2px;line-height:11.2px;color:#141414;transform:scaleX(0.8550);transform-origin:0 0;-webkit-text-stroke:0.15px currentColor;">000906</div>
<div class="a" style="left:188.29px;top:361.20px;font-size:11.2px;line-height:11.2px;color:#141414;transform:scaleX(0.8100);transform-origin:0 0;-webkit-text-stroke:0.15px currentColor;">BM BIKE IMPORTADORA</div>
<div class="a" style="left:512.34px;top:361.20px;font-size:11.2px;line-height:11.2px;color:#141414;transform:scaleX(0.8550);transform-origin:0 0;-webkit-text-stroke:0.15px currentColor;">1</div>
<div class="a" style="left:543.60px;top:361.20px;font-size:11.2px;line-height:11.2px;color:#141414;transform:scaleX(0.7820);transform-origin:0 0;-webkit-text-stroke:0.15px currentColor;">R$</div>
<div class="a" style="left:577.82px;top:361.20px;font-size:11.2px;line-height:11.2px;color:#141414;transform:scaleX(0.8550);transform-origin:0 0;-webkit-text-stroke:0.15px currentColor;">1.057,55</div>
<div class="a" style="left:628.60px;top:361.20px;font-size:11.2px;line-height:11.2px;color:#141414;transform:scaleX(0.7820);transform-origin:0 0;-webkit-text-stroke:0.15px currentColor;">R$</div>
<div class="a" style="left:670.41px;top:361.20px;font-size:11.2px;line-height:11.2px;color:#141414;transform:scaleX(0.8550);transform-origin:0 0;-webkit-text-stroke:0.15px currentColor;">100,00</div>
<div class="a" style="left:712.80px;top:361.20px;font-size:11.2px;line-height:11.2px;color:#141414;transform:scaleX(0.7820);transform-origin:0 0;-webkit-text-stroke:0.15px currentColor;">R$</div>
<div class="a" style="left:746.82px;top:361.20px;font-size:11.2px;line-height:11.2px;color:#141414;transform:scaleX(0.8550);transform-origin:0 0;-webkit-text-stroke:0.15px currentColor;">1.157,55</div>
<div class="a" style="left:817.16px;top:361.20px;font-size:11.2px;line-height:11.2px;color:#141414;transform:scaleX(0.8900);transform-origin:0 0;-webkit-text-stroke:0.15px currentColor;">01/05/2025</div>
<div class="a" style="left:902.50px;top:361.20px;font-size:11.2px;line-height:11.2px;color:#141414;transform:scaleX(0.9400);transform-origin:0 0;-webkit-text-stroke:0.15px currentColor;">Custo com matéria prima</div>
<div class="a" style="left:1185.89px;top:361.20px;font-size:11.2px;line-height:11.2px;color:#141414;transform:scaleX(0.9400);transform-origin:0 0;-webkit-text-stroke:0.15px currentColor;">Pix</div>
<div class="a" style="left:1276.11px;top:361.20px;font-size:11.2px;line-height:11.2px;color:#36b865;transform:scaleX(0.9400);transform-origin:0 0;-webkit-text-stroke:0.15px currentColor;">Pago</div>
<div class="a" style="left:1325.00px;top:361.20px;font-size:11.2px;line-height:11.2px;color:#141414;transform:scaleX(0.7820);transform-origin:0 0;-webkit-text-stroke:0.15px currentColor;">R$</div>
<div class="a" style="left:1360.02px;top:361.20px;font-size:11.2px;line-height:11.2px;color:#141414;transform:scaleX(0.8550);transform-origin:0 0;-webkit-text-stroke:0.15px currentColor;">1.157,55</div>
<div class="a" style="left:1409.50px;top:361.20px;font-size:11.2px;line-height:11.2px;color:#141414;transform:scaleX(0.7820);transform-origin:0 0;-webkit-text-stroke:0.15px currentColor;">R$</div>
<div class="a" style="left:301px;top:301px;width:200px;height:91px;overflow:hidden;background:linear-gradient(#87b2da 0,#a3bfd9 4px,#c2d0dc 9px,#d9dddf 17px,#e1e1e1 35px,#e5e5e5 64px,#f2f2f2 78px,#fefefe 91px)">
<div class="a" style="left:33px;top:2px;width:46px;height:75px;background:#b8b8b8;filter:blur(6.5px)"></div>
<div class="a" style="left:125px;top:2px;width:46px;height:75px;background:#b8b8b8;filter:blur(6.5px)"></div>
<div class="a" style="left:0;top:0;width:200px;height:12px;background:linear-gradient(rgba(135,178,218,.75),rgba(200,210,220,.0))"></div>
</div>
<div class="a" style="left:1256.1px;top:587.1px;width:63.8px;height:16.5px;border:2px solid #217346"></div>
<div class="a" style="left:1317px;top:600px;width:4.5px;height:4.5px;background:#217346;border:0.6px solid #fff"></div>
<div class="a" style="left:1321.2px;top:562px;width:24.5px;height:24.4px;background:#fff;border:1px solid #7a7a7a;border-radius:5px;box-shadow:0 3px 6px rgba(0,0,0,.14)"></div>
<svg style="left:1326.3px;top:567.5px" width="14.5" height="13" viewBox="0 0 28 25.2">
<defs><linearGradient id="clb" x1="0" y1="0" x2="0" y2="1"><stop offset="0" stop-color="#1aa2f4"/><stop offset=".55" stop-color="#3aae6a"/><stop offset="1" stop-color="#f4c400"/></linearGradient>
<linearGradient id="crb" x1="0" y1="0" x2="0" y2="1"><stop offset="0" stop-color="#a64ff0"/><stop offset=".5" stop-color="#ee5a90"/><stop offset="1" stop-color="#fb9c50"/></linearGradient></defs>
<path d="M4.8 0 H19.3 Q21.6 0 22.3 7.1 H17.7 L11 18.1 H2 Q0 18.1 0.3 15.8 L3 3 Q3.7 0 4.8 0 Z" fill="url(#clb)"/>
<path d="M14.5 0 H19.3 Q21.6 0 22.3 7.1 H17.7 Z" fill="#1c4fd6" opacity=".85"/>
<path d="M17.7 7.1 H25.6 Q28 7.1 27.7 9.6 L25.1 22.4 Q24.5 25.2 21.5 25.2 H9.8 Q7.6 25.2 7.1 22.2 L6.2 18.1 H14.2 Z" fill="url(#crb)"/>
<path d="M6.2 18.1 H13.5 L11.2 25.2 H9.8 Q7.6 25.2 7.1 22.2 Z" fill="#f4582e" opacity=".9"/>
</svg>
<div class="a" style="left:1427.5px;top:204px;width:15.5px;height:515px;background:#f4f5f5;border-radius:8px"></div>
<svg style="left:1431.5px;top:207.8px" width="8.5" height="6" viewBox="0 0 8.5 6"><path d="M4.25 0.3 L8.3 5.8 H0.2 Z" fill="#6e6e6e"/></svg>
<div class="a" style="left:1431.1px;top:219px;width:8.7px;height:397.7px;background:#717171;border-radius:4.4px"></div>
<svg style="left:1431.3px;top:708px" width="8.5" height="6" viewBox="0 0 8.5 6"><path d="M0.2 0.2 H8.3 L4.25 5.7 Z" fill="#6e6e6e"/></svg>
<div class="a" style="left:0;top:717px;width:1445px;height:30px;background:linear-gradient(90deg,#e1e9e5 0,#e4e9e6 150px,#e8e9e9 450px,#e8e9e9 850px,#e6eae8 1445px)"></div><div class="a" style="left:0;top:717px;width:1445px;height:2px;background:rgba(0,0,0,.025)"></div>
<div class="a" style="left:403.5px;top:712px;width:193.3px;height:31.7px;background:#fff;border-radius:0 0 5px 5px;box-shadow:0 0.5px 1px rgba(0,0,0,.1)"></div>
<svg style="left:23.3px;top:727.4px" width="6" height="9" viewBox="0 0 6 9"><path d="M5.5 0.5 L0.8 4.5 L5.5 8.5" fill="none" stroke="#9a9a9a" stroke-width="1.1"/></svg>
<svg style="left:54px;top:727.4px" width="6" height="9" viewBox="0 0 6 9"><path d="M0.5 0.5 L5.2 4.5 L0.5 8.5" fill="none" stroke="#9a9a9a" stroke-width="1.1"/></svg>
<div class="a" style="left:114.60px;top:726.40px;font-size:13px;line-height:13px;color:#333;transform:scaleX(0.9536);transform-origin:0 0;-webkit-text-stroke:0.2px currentColor;">Cadastros</div>
<div class="a" style="left:184.5px;top:723px;width:1px;height:18px;background:#cfcfcf"></div>
<div class="a" style="left:203.50px;top:726.30px;font-size:13px;line-height:13px;color:#333;transform:scaleX(0.9681);transform-origin:0 0;-webkit-text-stroke:0.2px currentColor;">Lançamentos Contas a Receber</div>
<div class="a" style="left:399.5px;top:723px;width:1px;height:18px;background:#cfcfcf"></div>
<div class="a" style="left:412.50px;top:723.70px;font-size:13px;line-height:13px;color:#111;font-weight:bold;transform:scaleX(0.9789);transform-origin:0 0;">Lançamentos Contas a pagar</div>
<div class="a" style="left:412.5px;top:739.7px;width:177.5px;height:1.8px;background:#217346"></div>
<div class="a" style="left:600.4px;top:723px;width:1px;height:18px;background:#cfcfcf"></div>
<div class="a" style="left:639.5px;top:730.3px;width:11.8px;height:1.3px;background:#333"></div>
<div class="a" style="left:644.8px;top:725px;width:1.3px;height:11.8px;background:#333"></div>
<div class="a" style="left:869px;top:727.5px;width:2px;height:2px;border-radius:1px;background:#222"></div>
<div class="a" style="left:869px;top:731.5px;width:2px;height:2px;border-radius:1px;background:#222"></div>
<div class="a" style="left:869px;top:735.5px;width:2px;height:2px;border-radius:1px;background:#222"></div>
<div class="a" style="left:885px;top:724px;width:540px;height:17px;background:#f1f3f2;border-radius:9px"></div>
<svg style="left:890.3px;top:728.5px" width="6" height="8" viewBox="0 0 6 8"><path d="M5.8 0.2 V7.8 L0.2 4 Z" fill="#6e6e6e"/></svg>
<div class="a" style="left:900.8px;top:728.4px;width:425.6px;height:8px;background:#717171;border-radius:4px"></div>
<svg style="left:1414.7px;top:728.5px" width="6" height="8" viewBox="0 0 6 8"><path d="M0.2 0.2 V7.8 L5.8 4 Z" fill="#6e6e6e"/></svg>
<div class="a" style="left:0;top:746.8px;width:1445px;height:21px;background:#f3f3f3"></div>
<div class="a" style="left:0;top:767.5px;width:1445px;height:3px;background:#1c1c1c"></div>
<div class="a" style="left:10.00px;top:753.15px;font-size:10.3px;line-height:10.3px;color:#333;transform:scaleX(0.9391);transform-origin:0 0;-webkit-text-stroke:0.2px currentColor;">Pronto</div>
<svg style="left:58px;top:752.3px" width="14" height="12" viewBox="0 0 14 12"><rect x="0.5" y="0.5" width="13" height="11" fill="none" stroke="#444" stroke-width="1"/><path d="M0.5 3 H13.5 M2.5 5.5 H6 M2.5 8 H5" stroke="#444" stroke-width="1"/><circle cx="10" cy="8" r="2.5" fill="#fff" stroke="#444" stroke-width="1"/><circle cx="10" cy="8" r="1" fill="#444"/></svg>
<svg style="left:88px;top:751px" width="14" height="14" viewBox="0 0 14 14"><circle cx="6" cy="2" r="1.5" fill="none" stroke="#444" stroke-width="1"/><path d="M1 4.5 L6 5.5 L11 4.5 M6 5.5 V9 L3 13 M6 9 L8 11 M8.5 10 L13 14 M13 10 L8.5 14" fill="none" stroke="#444" stroke-width="1"/></svg>
<div class="a" style="left:105.50px;top:753.15px;font-size:10.3px;line-height:10.3px;color:#222;font-weight:bold;transform:scaleX(0.9207);transform-origin:0 0;">Acessibilidade: investigar</div>
<svg style="left:1040.5px;top:751px" width="14" height="14" viewBox="0 0 14 14"><rect x="0.5" y="0.5" width="12" height="9" fill="none" stroke="#444" stroke-width="1"/><circle cx="9.5" cy="10" r="2.8" fill="#f3f3f3" stroke="#444" stroke-width="1"/></svg>
<div class="a" style="left:1056.60px;top:752.85px;font-size:10.3px;line-height:10.3px;color:#333;transform:scaleX(0.9428);transform-origin:0 0;-webkit-text-stroke:0.2px currentColor;">Exibir Configurações</div>
<div class="a" style="left:1164.7px;top:748px;width:37.6px;height:19px;background:#dedede;border-radius:2px"></div>
<svg style="left:1177.5px;top:751.5px" width="13" height="13" viewBox="0 0 13 13"><rect x="0.5" y="0.5" width="12" height="12" fill="none" stroke="#333" stroke-width="1"/><path d="M0.5 4.5 H12.5 M0.5 8.5 H12.5 M4.5 0.5 V12.5 M8.5 0.5 V12.5" stroke="#333" stroke-width="1"/></svg>
<svg style="left:1215px;top:751.5px" width="13" height="13" viewBox="0 0 13 13"><rect x="0.5" y="0.5" width="12" height="12" fill="none" stroke="#333" stroke-width="1"/><rect x="2.5" y="2.5" width="8" height="8" fill="none" stroke="#333" stroke-width="1"/><path d="M4 5 H9 M4 7 H9" stroke="#333" stroke-width=".8"/></svg>
<svg style="left:1252px;top:751.5px" width="14" height="13" viewBox="0 0 14 13"><rect x="0.5" y="0.5" width="13" height="12" fill="none" stroke="#333" stroke-width="1"/><path d="M0.5 8.5 H7 V0.5" fill="none" stroke="#333" stroke-width="1"/></svg>
<div class="a" style="left:1282.8px;top:757.5px;width:7.7px;height:1px;background:#444"></div>
<div class="a" style="left:1295.6px;top:757.5px;width:93.3px;height:1px;background:#8a8a8a"></div>
<div class="a" style="left:1342.2px;top:755px;width:1px;height:6px;background:#8a8a8a"></div>
<div class="a" style="left:1330px;top:752.6px;width:4.8px;height:10.4px;background:#555;border-radius:1px"></div>
<div class="a" style="left:1393.6px;top:757.5px;width:7px;height:1px;background:#444"></div>
<div class="a" style="left:1396.6px;top:754.5px;width:1px;height:7px;background:#444"></div>
<div class="a" style="left:1413.00px;top:752.85px;font-size:10.3px;line-height:10.3px;color:#333;transform:scaleX(0.8974);transform-origin:0 0;-webkit-text-stroke:0.2px currentColor;">80%</div>
</body></html>
